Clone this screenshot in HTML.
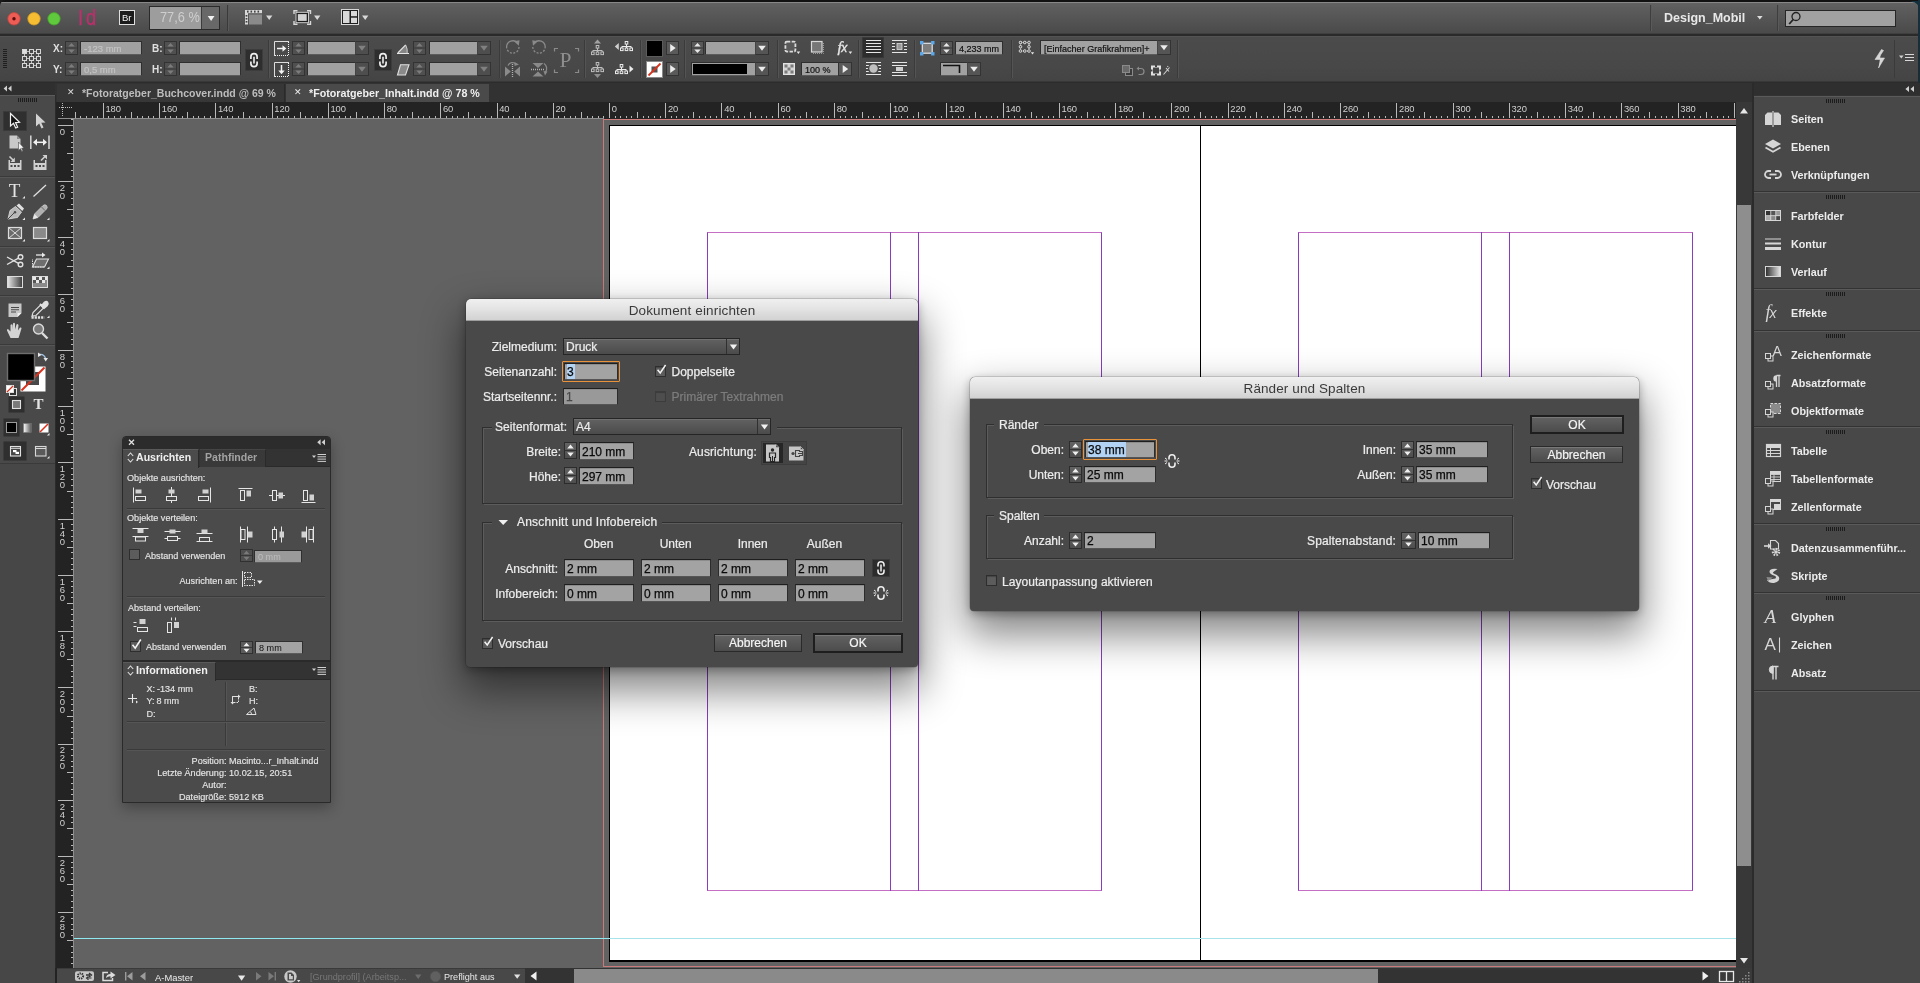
<!DOCTYPE html>
<html><head><meta charset="utf-8"><title>InDesign</title>
<style>
*{box-sizing:border-box;margin:0;padding:0}
html,body{width:1920px;height:983px;overflow:hidden;background:#474747;font-family:"Liberation Sans",sans-serif;font-size:11px;color:#e6e6e6}
.a{position:absolute}
svg{position:absolute;overflow:visible}
.t{position:absolute;white-space:nowrap;line-height:1}
.fld{position:absolute;background:#a2a2a2;border:1px solid #2f2f2f;border-bottom-color:#5c5c5c;color:#111;font-size:12px;line-height:1;white-space:nowrap;overflow:hidden}
.dt{-webkit-text-stroke:0.22px currentColor}
.sep{position:absolute;width:1px;background:#3a3a3a;border-right:1px solid #555;box-sizing:content-box}
</style></head><body><div id="root" style="position:absolute;left:0;top:0;width:1920px;height:983px;will-change:transform;overflow:hidden">
<!-- app bar -->
<div class="a" style="left:0;top:0;width:1920px;height:36px;background:linear-gradient(#121212 0,#121212 1.800px,#8a8a8a 2px,#868686 2.800px,#626262 3.200px,#5c5c5c 9px,#4a4a4a 33px,#2a2a2a 34.500px,#2a2a2a 36px)"></div>
<!-- control bar -->
<div class="a" style="left:0;top:36px;width:1920px;height:47px;background:linear-gradient(#5a5a5a 0,#4b4b4b 1px,#484848 30px,#444 45px,#2c2c2c 46px)"></div>
<!-- tab bar -->
<div class="a" style="left:0;top:83px;width:1920px;height:19px;background:#323232"></div>
<div class="a" style="left:57px;top:84px;width:228px;height:18px;background:#373737;border-right:1px solid #2a2a2a"></div>
<div class="a" style="left:286px;top:84px;width:203px;height:18px;background:#4a4a4a"></div>
<div class="t" style="left:66.500px;top:87.500px;font-size:9px;color:#ddd">✕</div>
<div class="t" style="left:82px;top:87.5px;font-size:11.5px;font-weight:bold;color:#bdbdbd;transform:scaleX(0.915);transform-origin:0 0">*Fotoratgeber_Buchcover.indd @ 69 %</div>
<div class="t" style="left:293.500px;top:87.500px;font-size:9px;color:#eee">✕</div>
<div class="t" style="left:309px;top:87.5px;font-size:11.5px;font-weight:bold;color:#f0f0f0;transform:scaleX(0.93);transform-origin:0 0">*Fotoratgeber_Inhalt.indd @ 78 %</div>
<!-- canvas -->
<div class="a" style="left:73px;top:118px;width:1663px;height:851px;background:#626262;overflow:hidden">
  <!-- page (coords relative: subtract 73,118) -->
  <div class="a" style="left:536px;top:7px;width:1200px;height:837px;background:#fff;border:1px solid #000;border-bottom-width:2px"></div>
  <!-- spine -->
  <div class="a" style="left:1127px;top:7px;width:1px;height:836px;background:#000"></div>
  <!-- bleed red -->
  <div class="a" style="left:530px;top:0px;width:1300px;height:849px;border:1.3px solid #c97b7b;border-top:2px solid #cf7c7c"></div>
  <!-- margins left page: abs x 707.5..1101.5 y 232..890 -->
  <div class="a" style="left:634px;top:114px;width:395px;height:659px;border:1px solid #883cbe;border-top-color:#c46fc4;border-bottom-color:#c46fc4"></div>
  <div class="a" style="left:817px;top:114px;width:29px;height:659px;border-left:1px solid #883cbe;border-right:1px solid #883cbe"></div>
  <div class="a" style="left:1225px;top:114px;width:395px;height:659px;border:1px solid #883cbe;border-top-color:#c46fc4;border-bottom-color:#c46fc4"></div>
  <div class="a" style="left:1408px;top:114px;width:29px;height:659px;border-left:1px solid #883cbe;border-right:1px solid #883cbe"></div>
  <!-- cyan guide -->
  <div class="a" style="left:0;top:820px;width:536px;height:1.4px;background:#8fe9f2"></div>
  <div class="a" style="left:536px;top:820px;width:1200px;height:1.4px;background:#a6e3ea"></div>
</div>
<!-- v scrollbar -->
<div class="a" style="left:1736px;top:102px;width:16px;height:866px;background:#383838"></div>
<div class="a" style="left:1737px;top:205px;width:14px;height:661px;background:#8e8e8e"></div>
<svg style="left:1740px;top:107px" width="9" height="8"><path d="M0 6.500 L4 1 L8 6.500Z" fill="#e6e6e6"/></svg>
<svg style="left:1740px;top:957px" width="9" height="8"><path d="M0 1 L4 6.500 L8 1Z" fill="#e6e6e6"/></svg>
<div class="a" style="left:1752px;top:83px;width:2px;height:900px;background:#2b2b2b"></div>
<!-- bottom bar -->
<div class="a" style="left:56px;top:968px;width:1696px;height:15px;background:#484848;border-top:1px solid #3a3a3a"></div>
<div class="a" style="left:525px;top:968px;width:1185px;height:15px;background:#333"></div>
<div class="a" style="left:574px;top:969px;width:804px;height:14px;background:#8a8a8a"></div>
<div class="a" style="left:1710px;top:968px;width:42px;height:15px;background:#3a3a3a"></div>
<div class="a" style="left:56px;top:102px;width:1680px;height:17px;background:#232323"></div>
<div class="a" style="left:56px;top:118px;width:18px;height:850px;background:#232323"></div>
<div class="a" style="left:55px;top:95px;width:1px;height:888px;background:#2b2b2b"></div>
<div class="a" style="left:58px;top:118px;width:546px;height:1px;background:#8e8e8e"></div>
<svg style="left:0;top:0" width="1920" height="983" shape-rendering="crispEdges">
<path d="M75.5 112 V118 M80.5 116 V118 M86.5 116 V118 M92.5 116 V118 M97.5 116 V118 M103.5 103 V118 M108.5 116 V118 M114.5 116 V118 M120.5 116 V118 M125.5 116 V118 M131.5 112 V118 M137.5 116 V118 M142.5 116 V118 M148.5 116 V118 M153.5 116 V118 M159.5 103 V118 M165.5 116 V118 M170.5 116 V118 M176.5 116 V118 M182.5 116 V118 M187.5 112 V118 M193.5 116 V118 M198.5 116 V118 M204.5 116 V118 M210.5 116 V118 M215.5 103 V118 M221.5 116 V118 M227.5 116 V118 M232.5 116 V118 M238.5 116 V118 M243.5 112 V118 M249.5 116 V118 M255.5 116 V118 M260.5 116 V118 M266.5 116 V118 M272.5 103 V118 M277.5 116 V118 M283.5 116 V118 M288.5 116 V118 M294.5 116 V118 M300.5 112 V118 M305.5 116 V118 M311.5 116 V118 M317.5 116 V118 M322.5 116 V118 M328.5 103 V118 M333.5 116 V118 M339.5 116 V118 M345.5 116 V118 M350.5 116 V118 M356.5 112 V118 M362.5 116 V118 M367.5 116 V118 M373.5 116 V118 M378.5 116 V118 M384.5 103 V118 M390.5 116 V118 M395.5 116 V118 M401.5 116 V118 M407.5 116 V118 M412.5 112 V118 M418.5 116 V118 M423.5 116 V118 M429.5 116 V118 M435.5 116 V118 M440.5 103 V118 M446.5 116 V118 M452.5 116 V118 M457.5 116 V118 M463.5 116 V118 M468.5 112 V118 M474.5 116 V118 M480.5 116 V118 M485.5 116 V118 M491.5 116 V118 M497.5 103 V118 M502.5 116 V118 M508.5 116 V118 M513.5 116 V118 M519.5 116 V118 M525.5 112 V118 M530.5 116 V118 M536.5 116 V118 M542.5 116 V118 M547.5 116 V118 M553.5 103 V118 M558.5 116 V118 M564.5 116 V118 M570.5 116 V118 M575.5 116 V118 M581.5 112 V118 M587.5 116 V118 M592.5 116 V118 M598.5 116 V118 M603.5 116 V118 M609.5 103 V118 M615.5 116 V118 M620.5 116 V118 M626.5 116 V118 M631.5 116 V118 M637.5 112 V118 M643.5 116 V118 M648.5 116 V118 M654.5 116 V118 M660.5 116 V118 M665.5 103 V118 M671.5 116 V118 M676.5 116 V118 M682.5 116 V118 M688.5 116 V118 M693.5 112 V118 M699.5 116 V118 M705.5 116 V118 M710.5 116 V118 M716.5 116 V118 M721.5 103 V118 M727.5 116 V118 M733.5 116 V118 M738.5 116 V118 M744.5 116 V118 M750.5 112 V118 M755.5 116 V118 M761.5 116 V118 M766.5 116 V118 M772.5 116 V118 M778.5 103 V118 M783.5 116 V118 M789.5 116 V118 M795.5 116 V118 M800.5 116 V118 M806.5 112 V118 M811.5 116 V118 M817.5 116 V118 M823.5 116 V118 M828.5 116 V118 M834.5 103 V118 M840.5 116 V118 M845.5 116 V118 M851.5 116 V118 M856.5 116 V118 M862.5 112 V118 M868.5 116 V118 M873.5 116 V118 M879.5 116 V118 M885.5 116 V118 M890.5 103 V118 M896.5 116 V118 M901.5 116 V118 M907.5 116 V118 M913.5 116 V118 M918.5 112 V118 M924.5 116 V118 M930.5 116 V118 M935.5 116 V118 M941.5 116 V118 M946.5 103 V118 M952.5 116 V118 M958.5 116 V118 M963.5 116 V118 M969.5 116 V118 M975.5 112 V118 M980.5 116 V118 M986.5 116 V118 M991.5 116 V118 M997.5 116 V118 M1003.5 103 V118 M1008.5 116 V118 M1014.5 116 V118 M1020.5 116 V118 M1025.5 116 V118 M1031.5 112 V118 M1036.5 116 V118 M1042.5 116 V118 M1048.5 116 V118 M1053.5 116 V118 M1059.5 103 V118 M1065.5 116 V118 M1070.5 116 V118 M1076.5 116 V118 M1081.5 116 V118 M1087.5 112 V118 M1093.5 116 V118 M1098.5 116 V118 M1104.5 116 V118 M1110.5 116 V118 M1115.5 103 V118 M1121.5 116 V118 M1126.5 116 V118 M1132.5 116 V118 M1138.5 116 V118 M1143.5 112 V118 M1149.5 116 V118 M1155.5 116 V118 M1160.5 116 V118 M1166.5 116 V118 M1171.5 103 V118 M1177.5 116 V118 M1183.5 116 V118 M1188.5 116 V118 M1194.5 116 V118 M1200.5 112 V118 M1205.5 116 V118 M1211.5 116 V118 M1216.5 116 V118 M1222.5 116 V118 M1228.5 103 V118 M1233.5 116 V118 M1239.5 116 V118 M1245.5 116 V118 M1250.5 116 V118 M1256.5 112 V118 M1261.5 116 V118 M1267.5 116 V118 M1273.5 116 V118 M1278.5 116 V118 M1284.5 103 V118 M1290.5 116 V118 M1295.5 116 V118 M1301.5 116 V118 M1306.5 116 V118 M1312.5 112 V118 M1318.5 116 V118 M1323.5 116 V118 M1329.5 116 V118 M1334.5 116 V118 M1340.5 103 V118 M1346.5 116 V118 M1351.5 116 V118 M1357.5 116 V118 M1363.5 116 V118 M1368.5 112 V118 M1374.5 116 V118 M1379.5 116 V118 M1385.5 116 V118 M1391.5 116 V118 M1396.5 103 V118 M1402.5 116 V118 M1408.5 116 V118 M1413.5 116 V118 M1419.5 116 V118 M1424.5 112 V118 M1430.5 116 V118 M1436.5 116 V118 M1441.5 116 V118 M1447.5 116 V118 M1453.5 103 V118 M1458.5 116 V118 M1464.5 116 V118 M1469.5 116 V118 M1475.5 116 V118 M1481.5 112 V118 M1486.5 116 V118 M1492.5 116 V118 M1498.5 116 V118 M1503.5 116 V118 M1509.5 103 V118 M1514.5 116 V118 M1520.5 116 V118 M1526.5 116 V118 M1531.5 116 V118 M1537.5 112 V118 M1543.5 116 V118 M1548.5 116 V118 M1554.5 116 V118 M1559.5 116 V118 M1565.5 103 V118 M1571.5 116 V118 M1576.5 116 V118 M1582.5 116 V118 M1588.5 116 V118 M1593.5 112 V118 M1599.5 116 V118 M1604.5 116 V118 M1610.5 116 V118 M1616.5 116 V118 M1621.5 103 V118 M1627.5 116 V118 M1633.5 116 V118 M1638.5 116 V118 M1644.5 116 V118 M1649.5 112 V118 M1655.5 116 V118 M1661.5 116 V118 M1666.5 116 V118 M1672.5 116 V118 M1678.5 103 V118 M1683.5 116 V118 M1689.5 116 V118 M1694.5 116 V118 M1700.5 116 V118 M1706.5 112 V118 M1711.5 116 V118 M1717.5 116 V118 M1723.5 116 V118 M1728.5 116 V118 M1734.5 103 V118" stroke="#b9b9b9" stroke-width="1" fill="none"/>
<path d="M71 119.5 H73 M58 125.5 H73 M71 131.5 H73 M71 136.5 H73 M71 142.5 H73 M71 147.5 H73 M67 153.5 H73 M71 159.5 H73 M71 164.5 H73 M71 170.5 H73 M71 176.5 H73 M58 181.5 H73 M71 187.5 H73 M71 192.5 H73 M71 198.5 H73 M71 204.5 H73 M67 209.5 H73 M71 215.5 H73 M71 221.5 H73 M71 226.5 H73 M71 232.5 H73 M58 237.5 H73 M71 243.5 H73 M71 249.5 H73 M71 254.5 H73 M71 260.5 H73 M67 266.5 H73 M71 271.5 H73 M71 277.5 H73 M71 282.5 H73 M71 288.5 H73 M58 294.5 H73 M71 299.5 H73 M71 305.5 H73 M71 311.5 H73 M71 316.5 H73 M67 322.5 H73 M71 327.5 H73 M71 333.5 H73 M71 339.5 H73 M71 344.5 H73 M58 350.5 H73 M71 356.5 H73 M71 361.5 H73 M71 367.5 H73 M71 372.5 H73 M67 378.5 H73 M71 384.5 H73 M71 389.5 H73 M71 395.5 H73 M71 401.5 H73 M58 406.5 H73 M71 412.5 H73 M71 417.5 H73 M71 423.5 H73 M71 429.5 H73 M67 434.5 H73 M71 440.5 H73 M71 446.5 H73 M71 451.5 H73 M71 457.5 H73 M58 462.5 H73 M71 468.5 H73 M71 474.5 H73 M71 479.5 H73 M71 485.5 H73 M67 491.5 H73 M71 496.5 H73 M71 502.5 H73 M71 507.5 H73 M71 513.5 H73 M58 519.5 H73 M71 524.5 H73 M71 530.5 H73 M71 536.5 H73 M71 541.5 H73 M67 547.5 H73 M71 552.5 H73 M71 558.5 H73 M71 564.5 H73 M71 569.5 H73 M58 575.5 H73 M71 581.5 H73 M71 586.5 H73 M71 592.5 H73 M71 597.5 H73 M67 603.5 H73 M71 609.5 H73 M71 614.5 H73 M71 620.5 H73 M71 626.5 H73 M58 631.5 H73 M71 637.5 H73 M71 642.5 H73 M71 648.5 H73 M71 654.5 H73 M67 659.5 H73 M71 665.5 H73 M71 671.5 H73 M71 676.5 H73 M71 682.5 H73 M58 687.5 H73 M71 693.5 H73 M71 699.5 H73 M71 704.5 H73 M71 710.5 H73 M67 716.5 H73 M71 721.5 H73 M71 727.5 H73 M71 732.5 H73 M71 738.5 H73 M58 744.5 H73 M71 749.5 H73 M71 755.5 H73 M71 761.5 H73 M71 766.5 H73 M67 772.5 H73 M71 777.5 H73 M71 783.5 H73 M71 789.5 H73 M71 794.5 H73 M58 800.5 H73 M71 806.5 H73 M71 811.5 H73 M71 817.5 H73 M71 822.5 H73 M67 828.5 H73 M71 834.5 H73 M71 839.5 H73 M71 845.5 H73 M71 850.5 H73 M58 856.5 H73 M71 862.5 H73 M71 867.5 H73 M71 873.5 H73 M71 879.5 H73 M67 884.5 H73 M71 890.5 H73 M71 895.5 H73 M71 901.5 H73 M71 907.5 H73 M58 912.5 H73 M71 918.5 H73 M71 924.5 H73 M71 929.5 H73 M71 935.5 H73 M67 940.5 H73 M71 946.5 H73 M71 952.5 H73 M71 957.5 H73 M71 963.5 H73" stroke="#b9b9b9" stroke-width="1" fill="none"/>
<path d="M73.5 118 V968" stroke="#8e8e8e" stroke-width="1"/>
<path d="M58.5 107.5 H72 M62.5 103 V117" stroke="#bbb" stroke-width="1" stroke-dasharray="1 1" fill="none"/>
</svg>
<div class="t" style="left:105.5px;top:104.300px;font-size:9.400px;color:#d0d0d0;letter-spacing:-0.1px">180</div>
<div class="t" style="left:161.8px;top:104.300px;font-size:9.400px;color:#d0d0d0;letter-spacing:-0.1px">160</div>
<div class="t" style="left:218.0px;top:104.300px;font-size:9.400px;color:#d0d0d0;letter-spacing:-0.1px">140</div>
<div class="t" style="left:274.3px;top:104.300px;font-size:9.400px;color:#d0d0d0;letter-spacing:-0.1px">120</div>
<div class="t" style="left:330.5px;top:104.300px;font-size:9.400px;color:#d0d0d0;letter-spacing:-0.1px">100</div>
<div class="t" style="left:386.7px;top:104.300px;font-size:9.400px;color:#d0d0d0;letter-spacing:-0.1px">80</div>
<div class="t" style="left:443.0px;top:104.300px;font-size:9.400px;color:#d0d0d0;letter-spacing:-0.1px">60</div>
<div class="t" style="left:499.2px;top:104.300px;font-size:9.400px;color:#d0d0d0;letter-spacing:-0.1px">40</div>
<div class="t" style="left:555.5px;top:104.300px;font-size:9.400px;color:#d0d0d0;letter-spacing:-0.1px">20</div>
<div class="t" style="left:611.7px;top:104.300px;font-size:9.400px;color:#d0d0d0;letter-spacing:-0.1px">0</div>
<div class="t" style="left:667.9px;top:104.300px;font-size:9.400px;color:#d0d0d0;letter-spacing:-0.1px">20</div>
<div class="t" style="left:724.2px;top:104.300px;font-size:9.400px;color:#d0d0d0;letter-spacing:-0.1px">40</div>
<div class="t" style="left:780.4px;top:104.300px;font-size:9.400px;color:#d0d0d0;letter-spacing:-0.1px">60</div>
<div class="t" style="left:836.7px;top:104.300px;font-size:9.400px;color:#d0d0d0;letter-spacing:-0.1px">80</div>
<div class="t" style="left:892.9px;top:104.300px;font-size:9.400px;color:#d0d0d0;letter-spacing:-0.1px">100</div>
<div class="t" style="left:949.1px;top:104.300px;font-size:9.400px;color:#d0d0d0;letter-spacing:-0.1px">120</div>
<div class="t" style="left:1005.4px;top:104.300px;font-size:9.400px;color:#d0d0d0;letter-spacing:-0.1px">140</div>
<div class="t" style="left:1061.6px;top:104.300px;font-size:9.400px;color:#d0d0d0;letter-spacing:-0.1px">160</div>
<div class="t" style="left:1117.9px;top:104.300px;font-size:9.400px;color:#d0d0d0;letter-spacing:-0.1px">180</div>
<div class="t" style="left:1174.1px;top:104.300px;font-size:9.400px;color:#d0d0d0;letter-spacing:-0.1px">200</div>
<div class="t" style="left:1230.3px;top:104.300px;font-size:9.400px;color:#d0d0d0;letter-spacing:-0.1px">220</div>
<div class="t" style="left:1286.6px;top:104.300px;font-size:9.400px;color:#d0d0d0;letter-spacing:-0.1px">240</div>
<div class="t" style="left:1342.8px;top:104.300px;font-size:9.400px;color:#d0d0d0;letter-spacing:-0.1px">260</div>
<div class="t" style="left:1399.1px;top:104.300px;font-size:9.400px;color:#d0d0d0;letter-spacing:-0.1px">280</div>
<div class="t" style="left:1455.3px;top:104.300px;font-size:9.400px;color:#d0d0d0;letter-spacing:-0.1px">300</div>
<div class="t" style="left:1511.5px;top:104.300px;font-size:9.400px;color:#d0d0d0;letter-spacing:-0.1px">320</div>
<div class="t" style="left:1567.8px;top:104.300px;font-size:9.400px;color:#d0d0d0;letter-spacing:-0.1px">340</div>
<div class="t" style="left:1624.0px;top:104.300px;font-size:9.400px;color:#d0d0d0;letter-spacing:-0.1px">360</div>
<div class="t" style="left:1680.3px;top:104.300px;font-size:9.400px;color:#d0d0d0;letter-spacing:-0.1px">380</div>
<div class="t" style="left:59.8px;top:126.8px;font-size:9.5px;color:#d0d0d0">0</div>
<div class="t" style="left:59.8px;top:183.0px;font-size:9.5px;color:#d0d0d0">2</div>
<div class="t" style="left:59.8px;top:191.0px;font-size:9.5px;color:#d0d0d0">0</div>
<div class="t" style="left:59.8px;top:239.3px;font-size:9.5px;color:#d0d0d0">4</div>
<div class="t" style="left:59.8px;top:247.3px;font-size:9.5px;color:#d0d0d0">0</div>
<div class="t" style="left:59.8px;top:295.5px;font-size:9.5px;color:#d0d0d0">6</div>
<div class="t" style="left:59.8px;top:303.5px;font-size:9.5px;color:#d0d0d0">0</div>
<div class="t" style="left:59.8px;top:351.8px;font-size:9.5px;color:#d0d0d0">8</div>
<div class="t" style="left:59.8px;top:359.8px;font-size:9.5px;color:#d0d0d0">0</div>
<div class="t" style="left:59.8px;top:408.0px;font-size:9.5px;color:#d0d0d0">1</div>
<div class="t" style="left:59.8px;top:416.0px;font-size:9.5px;color:#d0d0d0">0</div>
<div class="t" style="left:59.8px;top:424.0px;font-size:9.5px;color:#d0d0d0">0</div>
<div class="t" style="left:59.8px;top:464.2px;font-size:9.5px;color:#d0d0d0">1</div>
<div class="t" style="left:59.8px;top:472.2px;font-size:9.5px;color:#d0d0d0">2</div>
<div class="t" style="left:59.8px;top:480.2px;font-size:9.5px;color:#d0d0d0">0</div>
<div class="t" style="left:59.8px;top:520.5px;font-size:9.5px;color:#d0d0d0">1</div>
<div class="t" style="left:59.8px;top:528.5px;font-size:9.5px;color:#d0d0d0">4</div>
<div class="t" style="left:59.8px;top:536.5px;font-size:9.5px;color:#d0d0d0">0</div>
<div class="t" style="left:59.8px;top:576.7px;font-size:9.5px;color:#d0d0d0">1</div>
<div class="t" style="left:59.8px;top:584.7px;font-size:9.5px;color:#d0d0d0">6</div>
<div class="t" style="left:59.8px;top:592.7px;font-size:9.5px;color:#d0d0d0">0</div>
<div class="t" style="left:59.8px;top:633.0px;font-size:9.5px;color:#d0d0d0">1</div>
<div class="t" style="left:59.8px;top:641.0px;font-size:9.5px;color:#d0d0d0">8</div>
<div class="t" style="left:59.8px;top:649.0px;font-size:9.5px;color:#d0d0d0">0</div>
<div class="t" style="left:59.8px;top:689.2px;font-size:9.5px;color:#d0d0d0">2</div>
<div class="t" style="left:59.8px;top:697.2px;font-size:9.5px;color:#d0d0d0">0</div>
<div class="t" style="left:59.8px;top:705.2px;font-size:9.5px;color:#d0d0d0">0</div>
<div class="t" style="left:59.8px;top:745.4px;font-size:9.5px;color:#d0d0d0">2</div>
<div class="t" style="left:59.8px;top:753.4px;font-size:9.5px;color:#d0d0d0">2</div>
<div class="t" style="left:59.8px;top:761.4px;font-size:9.5px;color:#d0d0d0">0</div>
<div class="t" style="left:59.8px;top:801.7px;font-size:9.5px;color:#d0d0d0">2</div>
<div class="t" style="left:59.8px;top:809.7px;font-size:9.5px;color:#d0d0d0">4</div>
<div class="t" style="left:59.8px;top:817.7px;font-size:9.5px;color:#d0d0d0">0</div>
<div class="t" style="left:59.8px;top:857.9px;font-size:9.5px;color:#d0d0d0">2</div>
<div class="t" style="left:59.8px;top:865.9px;font-size:9.5px;color:#d0d0d0">6</div>
<div class="t" style="left:59.8px;top:873.9px;font-size:9.5px;color:#d0d0d0">0</div>
<div class="t" style="left:59.8px;top:914.2px;font-size:9.5px;color:#d0d0d0">2</div>
<div class="t" style="left:59.8px;top:922.2px;font-size:9.5px;color:#d0d0d0">8</div>
<div class="t" style="left:59.8px;top:930.2px;font-size:9.5px;color:#d0d0d0">0</div>
<!-- traffic lights -->
<svg style="left:0;top:0" width="420" height="36">
<circle cx="14" cy="18.800" r="6.2" fill="#ee5d55" stroke="#c9453e" stroke-width="0.8"/><circle cx="14" cy="18.800" r="1.7" fill="#5a0d0a"/>
<circle cx="34" cy="18.800" r="6.2" fill="#f6bd32" stroke="#d59e22" stroke-width="0.8"/>
<circle cx="54" cy="18.800" r="6.2" fill="#5fc83c" stroke="#46a52a" stroke-width="0.8"/>
<!-- Br -->
<rect x="119.5" y="10.5" width="15" height="14" fill="#1c1c1c" stroke="#e0e0e0" stroke-width="1"/>
<!-- zoom field -->
<rect x="149.5" y="6.5" width="70" height="23" fill="#9d9d9d" stroke="#2a2a2a"/>
<rect x="202" y="7" width="17" height="22" fill="#686868"/>
<path d="M201.5 7 V29" stroke="#3c3c3c"/>
<path d="M207.700 16 h6.800 l-3.400 5 z" fill="#f2f2f2"/>
<path d="M227.5 5 V31" stroke="#3a3a3a"/><path d="M228.5 5 V31" stroke="#5a5a5a"/>
<!-- view options icon -->
<g fill="#d8d8d8">
<rect x="245" y="10" width="17" height="3.2"/><rect x="245" y="13" width="3" height="11.5"/>
<rect x="249" y="14.5" width="13" height="10" fill="#8a8a8a"/>
<path d="M266 15.5 h6.4 l-3.2 4.6z"/>
</g>
<g fill="#444"><rect x="247" y="10.6" width="1.6" height="2"/><rect x="250.5" y="10.6" width="1.6" height="2"/><rect x="254" y="10.6" width="1.6" height="2"/><rect x="257.500" y="10.6" width="1.6" height="2"/><rect x="245.6" y="15" width="1.8" height="1.6"/><rect x="245.6" y="18" width="1.8" height="1.6"/><rect x="245.6" y="21" width="1.8" height="1.6"/></g>
<!-- screen mode icon -->
<g fill="none" stroke="#d8d8d8" stroke-width="1.4">
<path d="M294 14 V10.700 H297.500 M307 10.700 H310.500 V14 M310.500 21 V24.300 H307 M297.500 24.300 H294 V21"/>
<rect x="296" y="12.300" width="12.500" height="10.400" fill="#1e1e1e" stroke="#d8d8d8" stroke-width="0.900"/><rect x="297.800" y="14.100" width="8.900" height="6.800" fill="#d2d2d2" stroke="none"/></g>
<path d="M314 15.500 h6.400 l-3.200 4.600z" fill="#d8d8d8"/>
<!-- arrange icon -->
<g fill="#d8d8d8"><rect x="341.500" y="9.500" width="17" height="15" fill="#1e1e1e" stroke="#d8d8d8" stroke-width="1"/>
<rect x="343" y="11" width="6.500" height="12"/><rect x="351" y="11" width="6" height="5.200"/><rect x="351" y="17.700" width="6" height="5.300"/>
<path d="M362 15.500 h6.400 l-3.200 4.600z"/></g>
</svg>
<div class="t" style="left:78px;top:6.600px;font-size:22.300px;letter-spacing:3.500px;color:#bd2f6d;transform:scaleX(0.820);transform-origin:0 0;-webkit-text-stroke:0.300px #bd2f6d">Id</div>
<div class="t" style="left:122px;top:13px;font-size:9.500px;color:#f0f0f0;letter-spacing:-0.1px">Br</div>
<div class="t" style="left:160px;top:10.300px;font-size:14.200px;color:#cecece;transform:scaleX(0.900);transform-origin:0 0">77,6 %</div>
<!-- right side -->
<div class="a" style="left:1650px;top:5px;width:1px;height:26px;background:#3e3e3e;border-right:1px solid #5a5a5a;box-sizing:content-box"></div>
<div class="t" style="left:1664px;top:11.500px;font-size:12.5px;font-weight:bold;color:#e8e8e8;">Design_Mobil</div>
<svg style="left:1757px;top:16px" width="6" height="4"><path d="M0 0 h5.600 l-2.800 3.600z" fill="#ddd"/></svg>
<div class="a" style="left:1777px;top:5px;width:1px;height:26px;background:#3e3e3e;border-right:1px solid #5a5a5a;box-sizing:content-box"></div>
<div class="a" style="left:1785px;top:10px;width:111px;height:17px;background:#a1a1a1;border:1px solid #262626"></div>
<svg style="left:1788px;top:11px" width="14" height="14"><circle cx="8" cy="5.500" r="4" fill="none" stroke="#222" stroke-width="1.300"/><path d="M5.200 8.500 L1.200 13" stroke="#222" stroke-width="1.800"/></svg>
<!-- window corner -->
<div class="a" style="left:1918px;top:0;width:2px;height:983px;background:linear-gradient(#16303c 0,#1c2a30 120px,#222 300px,#222 100%)"></div>
<svg style="left:1911px;top:1px" width="8" height="8"><path d="M8 0 V8 A7 7 0 0 0 1 1 L0 0z" fill="#15303c"/></svg>
<svg style="left:0;top:0" width="6" height="6"><path d="M0 0 V6 A6 6 0 0 1 6 0z" fill="#1a1a1a"/></svg>
<svg style="left:3px;top:49px" width="5" height="20"><path d="M0 0.500 H4 M0 2.500 H4 M0 4.500 H4 M0 6.500 H4 M0 8.500 H4 M0 10.500 H4 M0 12.500 H4 M0 14.500 H4 M0 16.500 H4 M0 18.500 H4" stroke="#1f1f1f"/></svg>
<svg style="left:22px;top:49px" width="20" height="20"><g fill="none" stroke="#d6d6d6" stroke-width="1"><path d="M2.500 2.500 H17.500 M2.500 9.500 H17.500 M2.500 16.500 H17.500 M2.500 2.500 V16.500 M9.500 2.500 V16.500 M16.500 2.500 V16.500" stroke="#bdbdbd"/><rect x="0.5" y="0.5" width="4" height="4" fill="#e0e0e0"/><rect x="7.5" y="0.5" width="4" height="4" fill="#484848"/><rect x="14.5" y="0.5" width="4" height="4" fill="#484848"/><rect x="0.5" y="7.5" width="4" height="4" fill="#484848"/><rect x="7.5" y="7.5" width="4" height="4" fill="#484848"/><rect x="14.5" y="7.5" width="4" height="4" fill="#484848"/><rect x="0.5" y="14.5" width="4" height="4" fill="#484848"/><rect x="7.5" y="14.5" width="4" height="4" fill="#484848"/><rect x="14.5" y="14.5" width="4" height="4" fill="#484848"/></g></svg>
<div class="t" style="left:53px;top:43.5px;font-size:10px;color:#e0e0e0;font-weight:bold;">X:</div>
<div class="t" style="left:53px;top:64.5px;font-size:10px;color:#e0e0e0;font-weight:bold;">Y:</div>
<div class="a" style="left:65px;top:41px;width:13px;height:14px;background:#505050;border:1px solid #333"></div><svg style="left:65px;top:41px" width="13" height="14"><path d="M3.3 5.500 l3.200 -3.600 l3.200 3.600z M3.3 8.5 l3.200 3.600 l3.200 -3.600z" fill="#7c7c7c"/><path d="M1 7.0 H12" stroke="#3a3a3a"/></svg>
<div class="a" style="left:65px;top:62px;width:13px;height:14px;background:#505050;border:1px solid #333"></div><svg style="left:65px;top:62px" width="13" height="14"><path d="M3.3 5.500 l3.200 -3.600 l3.200 3.600z M3.3 8.5 l3.200 3.600 l3.200 -3.600z" fill="#7c7c7c"/><path d="M1 7.0 H12" stroke="#3a3a3a"/></svg>
<div class="fld" style="left:80px;top:41px;width:62px;height:14px;background:#a1a1a1;color:#c2c2c2;font-size:9.5px;line-height:11px;padding:0.500px 0 0 3px"><span style="display:inline-block;transform:scaleX(1);transform-origin:0 0;-webkit-text-stroke:0.200px currentColor">-123 mm</span></div>
<div class="fld" style="left:80px;top:62px;width:62px;height:14px;background:#a1a1a1;color:#c2c2c2;font-size:9.5px;line-height:11px;padding:0.500px 0 0 3px"><span style="display:inline-block;transform:scaleX(1);transform-origin:0 0;-webkit-text-stroke:0.200px currentColor">0,5 mm</span></div>
<div class="t" style="left:152px;top:43.5px;font-size:10px;color:#e0e0e0;font-weight:bold;">B:</div>
<div class="t" style="left:152px;top:64.5px;font-size:10px;color:#e0e0e0;font-weight:bold;">H:</div>
<div class="a" style="left:164px;top:41px;width:13px;height:14px;background:#505050;border:1px solid #333"></div><svg style="left:164px;top:41px" width="13" height="14"><path d="M3.3 5.500 l3.200 -3.600 l3.200 3.600z M3.3 8.5 l3.200 3.600 l3.200 -3.600z" fill="#7c7c7c"/><path d="M1 7.0 H12" stroke="#3a3a3a"/></svg>
<div class="a" style="left:164px;top:62px;width:13px;height:14px;background:#505050;border:1px solid #333"></div><svg style="left:164px;top:62px" width="13" height="14"><path d="M3.3 5.500 l3.200 -3.600 l3.200 3.600z M3.3 8.5 l3.200 3.600 l3.200 -3.600z" fill="#7c7c7c"/><path d="M1 7.0 H12" stroke="#3a3a3a"/></svg>
<div class="fld" style="left:179px;top:41px;width:62px;height:14px;background:#a1a1a1;color:#111;font-size:9.5px;line-height:11px;padding:0.500px 0 0 3px"><span style="display:inline-block;transform:scaleX(1);transform-origin:0 0;-webkit-text-stroke:0.200px currentColor"></span></div>
<div class="fld" style="left:179px;top:62px;width:62px;height:14px;background:#a1a1a1;color:#111;font-size:9.5px;line-height:11px;padding:0.500px 0 0 3px"><span style="display:inline-block;transform:scaleX(1);transform-origin:0 0;-webkit-text-stroke:0.200px currentColor"></span></div>
<div class="a" style="left:245px;top:49px;width:18px;height:22px;background:#2e2e2e;border:1px solid #3c3c3c"></div><svg style="left:245px;top:49px" width="18" height="22"><g fill="none" stroke="#eeeeee" stroke-width="1.700"><path d="M5.9 10 V7.800 A3.100 3.100 0 0 1 12.1 7.800 V10"/><path d="M5.9 12.500 V14.500 A3.100 3.100 0 0 0 12.1 14.500 V12.500"/><path d="M9.0 7.800 V14.600" stroke-width="1.600"/></g></svg>
<div class="a" style="left:268px;top:40px;width:1px;height:38px;background:#3b3b3b"></div><div class="a" style="left:269px;top:40px;width:1px;height:38px;background:#545454"></div>
<svg style="left:274px;top:41px" width="15" height="15"><path d="M0.500 15 V0.500 H15" stroke="#dedede" fill="none"/><path d="M14.500 1 V14.500 H1" stroke="#f4f4f4" stroke-dasharray="1 1" fill="none"/><path d="M3 7.500 H10" stroke="#f4f4f4" stroke-width="1.500"/><path d="M8.500 4.300 L12.300 7.500 L8.500 10.700z" fill="#f4f4f4"/></svg>
<svg style="left:274px;top:62px" width="15" height="15"><path d="M0.500 15 V0.500 H15" stroke="#dedede" fill="none"/><path d="M14.500 1 V14.500 H1" stroke="#f4f4f4" stroke-dasharray="1 1" fill="none"/><path d="M7.500 3 V10" stroke="#f4f4f4" stroke-width="1.500"/><path d="M4.300 8.500 L7.500 12.300 L10.700 8.500z" fill="#f4f4f4"/></svg>
<div class="a" style="left:292px;top:41px;width:13px;height:14px;background:#505050;border:1px solid #333"></div><svg style="left:292px;top:41px" width="13" height="14"><path d="M3.3 5.500 l3.200 -3.600 l3.200 3.600z M3.3 8.5 l3.200 3.600 l3.200 -3.600z" fill="#7c7c7c"/><path d="M1 7.0 H12" stroke="#3a3a3a"/></svg>
<div class="a" style="left:292px;top:62px;width:13px;height:14px;background:#505050;border:1px solid #333"></div><svg style="left:292px;top:62px" width="13" height="14"><path d="M3.3 5.500 l3.200 -3.600 l3.200 3.600z M3.3 8.5 l3.200 3.600 l3.200 -3.600z" fill="#7c7c7c"/><path d="M1 7.0 H12" stroke="#3a3a3a"/></svg>
<div class="fld" style="left:307px;top:41px;width:49px;height:14px;background:#a1a1a1;color:#111;font-size:9.5px;line-height:11px;padding:0.500px 0 0 3px"><span style="display:inline-block;transform:scaleX(1);transform-origin:0 0;-webkit-text-stroke:0.200px currentColor"></span></div>
<div class="fld" style="left:307px;top:62px;width:49px;height:14px;background:#a1a1a1;color:#111;font-size:9.5px;line-height:11px;padding:0.500px 0 0 3px"><span style="display:inline-block;transform:scaleX(1);transform-origin:0 0;-webkit-text-stroke:0.200px currentColor"></span></div>
<div class="a" style="left:355px;top:41px;width:14px;height:14px;background:#4e4e4e;border:1px solid #333;border-left-color:#444"></div><svg style="left:355px;top:41px" width="14" height="14"><path d="M3.2 4.7 h7.600 l-3.800 5z" fill="#808080"/></svg>
<div class="a" style="left:355px;top:62px;width:14px;height:14px;background:#4e4e4e;border:1px solid #333;border-left-color:#444"></div><svg style="left:355px;top:62px" width="14" height="14"><path d="M3.2 4.7 h7.600 l-3.800 5z" fill="#808080"/></svg>
<div class="a" style="left:374px;top:49px;width:18px;height:22px;background:#2e2e2e;border:1px solid #3c3c3c"></div><svg style="left:374px;top:49px" width="18" height="22"><g fill="none" stroke="#eeeeee" stroke-width="1.700"><path d="M5.9 10 V7.800 A3.100 3.100 0 0 1 12.1 7.800 V10"/><path d="M5.9 12.500 V14.500 A3.100 3.100 0 0 0 12.1 14.500 V12.500"/><path d="M9.0 7.800 V14.600" stroke-width="1.600"/></g></svg>
<svg style="left:397px;top:44px" width="13" height="11"><path d="M1 9.500 L8.700 1 Q10.800 5 10.200 9.500z" fill="#858585"/><path d="M0 9.500 H12 M0.800 9 L8.700 0.800" stroke="#e6e6e6" stroke-width="1.200" fill="none"/><path d="M8.700 1 Q10.800 5 10.200 9.500" stroke="#d8d8d8" stroke-width="0.900" fill="none"/></svg>
<svg style="left:397px;top:64px" width="13" height="12"><path d="M3.500 0.800 H12 L8.500 11 H0.500z" stroke="#e0e0e0" stroke-width="1.100" fill="#8a8a8a"/></svg>
<div class="a" style="left:413px;top:41px;width:13px;height:14px;background:#505050;border:1px solid #333"></div><svg style="left:413px;top:41px" width="13" height="14"><path d="M3.3 5.500 l3.200 -3.600 l3.200 3.600z M3.3 8.5 l3.200 3.600 l3.200 -3.600z" fill="#7c7c7c"/><path d="M1 7.0 H12" stroke="#3a3a3a"/></svg>
<div class="a" style="left:413px;top:62px;width:13px;height:14px;background:#505050;border:1px solid #333"></div><svg style="left:413px;top:62px" width="13" height="14"><path d="M3.3 5.500 l3.200 -3.600 l3.200 3.600z M3.3 8.5 l3.200 3.600 l3.200 -3.600z" fill="#7c7c7c"/><path d="M1 7.0 H12" stroke="#3a3a3a"/></svg>
<div class="fld" style="left:429px;top:41px;width:49px;height:14px;background:#a1a1a1;color:#111;font-size:9.5px;line-height:11px;padding:0.500px 0 0 3px"><span style="display:inline-block;transform:scaleX(1);transform-origin:0 0;-webkit-text-stroke:0.200px currentColor"></span></div>
<div class="fld" style="left:429px;top:62px;width:49px;height:14px;background:#a1a1a1;color:#111;font-size:9.5px;line-height:11px;padding:0.500px 0 0 3px"><span style="display:inline-block;transform:scaleX(1);transform-origin:0 0;-webkit-text-stroke:0.200px currentColor"></span></div>
<div class="a" style="left:477px;top:41px;width:14px;height:14px;background:#4e4e4e;border:1px solid #333;border-left-color:#444"></div><svg style="left:477px;top:41px" width="14" height="14"><path d="M3.2 4.7 h7.600 l-3.800 5z" fill="#808080"/></svg>
<div class="a" style="left:477px;top:62px;width:14px;height:14px;background:#4e4e4e;border:1px solid #333;border-left-color:#444"></div><svg style="left:477px;top:62px" width="14" height="14"><path d="M3.2 4.7 h7.600 l-3.800 5z" fill="#808080"/></svg>
<div class="a" style="left:499px;top:40px;width:1px;height:38px;background:#3b3b3b"></div><div class="a" style="left:500px;top:40px;width:1px;height:38px;background:#545454"></div>
<svg style="left:0;top:0" width="700" height="83"><g fill="none" stroke="#8a8a8a" stroke-width="1.300"><path d="M506.600 47 A6.200 6.200 0 0 1 517.500 43"/><path d="M519 47 A6.200 6.200 0 0 1 506.600 47" stroke-dasharray="2 1.500"/><path d="M514 41.200 L519.500 40.200 L518.800 45.800z" fill="#8a8a8a" stroke="none"/><path d="M545.200 47 A6.200 6.200 0 0 0 534.300 43"/><path d="M532.800 47 A6.200 6.200 0 0 0 545.200 47" stroke-dasharray="2 1.500"/><path d="M537.800 41.200 L532.300 40.200 L533 45.800z" fill="#8a8a8a" stroke="none"/><path d="M512.500 64 V77" stroke-dasharray="1 1" stroke="#b0b0b0"/><path d="M505 66.500 L510.800 71.500 L505 76.500z M520 66.500 L514.200 71.500 L520 76.500z" fill="#8a8a8a" stroke="none"/><path d="M508 65.500 A5 5 0 0 1 516 64"/><path d="M514.500 62 L519 64.500 L514.500 66z" fill="#8a8a8a" stroke="none"/><path d="M531 69.500 H545" stroke-dasharray="1 1" stroke="#b0b0b0"/><path d="M532.500 63 L538 68 L543.500 63z M532.500 76.500 L538 71.500 L543.500 76.500z" fill="#8a8a8a" stroke="none"/><path d="M544 63.500 A6 6 0 0 1 545.500 72"/><path d="M543.500 71 L547.500 71.500 L545 75.500z" fill="#8a8a8a" stroke="none"/><path d="M554.500 51.500 V48.500 H558 M575 48.500 H578.500 V51.500 M578.500 69.500 V72.500 H575 M558 72.500 H554.500 V69.500" stroke-width="1.200"/></g></svg>
<div class="t" style="left:559.500px;top:49.500px;font-family:'Liberation Serif',serif;font-size:21.500px;color:#8e8e8e">P</div>
<div class="a" style="left:584px;top:40px;width:1px;height:38px;background:#3b3b3b"></div><div class="a" style="left:585px;top:40px;width:1px;height:38px;background:#545454"></div>
<svg style="left:0;top:0" width="700" height="83"><g fill="none" stroke="#bdbdbd" stroke-width="1"><rect x="596.2" y="45.5" width="2.600" height="2.600"/><path d="M597.5 48.1 V50.5 M592.8 52.0 V50.5 H602.2 V52.0 M597.5 50.5 V52.0"/><rect x="591.5" y="52.0" width="2.600" height="2.600"/><rect x="596.2" y="52.0" width="2.600" height="2.600"/><rect x="600.9" y="52.0" width="2.600" height="2.600"/></g><path d="M594 43.500 L597.500 39.500 L601 43.500z" fill="#a2a2a2"/><g fill="none" stroke="#bdbdbd" stroke-width="1"><rect x="596.2" y="62.5" width="2.600" height="2.600"/><path d="M597.5 65.1 V67.5 M592.8 69.0 V67.5 H602.2 V69.0 M597.5 67.5 V69.0"/><rect x="591.5" y="69.0" width="2.600" height="2.600"/><rect x="596.2" y="69.0" width="2.600" height="2.600"/><rect x="600.9" y="69.0" width="2.600" height="2.600"/></g><path d="M594 74 L597.500 78 L601 74z" fill="#8e8e8e"/><g fill="none" stroke="#ececec" stroke-width="1"><rect x="625.2" y="41.5" width="2.600" height="2.600"/><path d="M626.5 44.1 V46.5 M621.8 48.0 V46.5 H631.2 V48.0 M626.5 46.5 V48.0"/><rect x="620.5" y="48.0" width="2.600" height="2.600"/><rect x="625.2" y="48.0" width="2.600" height="2.600"/><rect x="629.9" y="48.0" width="2.600" height="2.600"/></g><path d="M618.800 43 V50 L614.800 46.500z" fill="#cfcfcf"/><g fill="none" stroke="#ececec" stroke-width="1"><rect x="620.2" y="64.5" width="2.600" height="2.600"/><path d="M621.5 67.1 V69.5 M616.8 71.0 V69.5 H626.2 V71.0 M621.5 69.5 V71.0"/><rect x="615.5" y="71.0" width="2.600" height="2.600"/><rect x="620.2" y="71.0" width="2.600" height="2.600"/><rect x="624.9" y="71.0" width="2.600" height="2.600"/></g><path d="M629.500 65.500 V72.500 L633.500 69z" fill="#ececec"/></svg>
<div class="a" style="left:640px;top:40px;width:1px;height:38px;background:#3b3b3b"></div><div class="a" style="left:641px;top:40px;width:1px;height:38px;background:#545454"></div>
<div class="a" style="left:646px;top:40px;width:17px;height:17px;background:#000;border:1px solid #5c5c5c"></div>
<div class="a" style="left:646px;top:61px;width:17px;height:17px;background:#fff;border:1px solid #8a8a8a"></div>
<svg style="left:646px;top:61px" width="17" height="17"><rect x="5.500" y="5.500" width="6" height="6" fill="#555"/><path d="M2.500 14.500 L14.500 2.500" stroke="#d9321e" stroke-width="1.800"/></svg>
<div class="a" style="left:666px;top:41px;width:13px;height:14px;background:#5a5a5a;border:1px solid #333"></div><svg style="left:666px;top:41px" width="13" height="14"><path d="M4.2 3 v8 l5.500 -4z" fill="#ececec"/></svg>
<div class="a" style="left:666px;top:62px;width:13px;height:14px;background:#5a5a5a;border:1px solid #333"></div><svg style="left:666px;top:62px" width="13" height="14"><path d="M4.2 3 v8 l5.500 -4z" fill="#ececec"/></svg>
<div class="a" style="left:684px;top:40px;width:1px;height:38px;background:#3b3b3b"></div><div class="a" style="left:685px;top:40px;width:1px;height:38px;background:#545454"></div>
<div class="a" style="left:691px;top:41px;width:13px;height:14px;background:#585858;border:1px solid #333"></div><svg style="left:691px;top:41px" width="13" height="14"><path d="M3.3 5.500 l3.200 -3.600 l3.200 3.600z M3.3 8.5 l3.200 3.600 l3.200 -3.600z" fill="#e8e8e8"/><path d="M1 7.0 H12" stroke="#3a3a3a"/></svg>
<div class="fld" style="left:705px;top:41px;width:51px;height:14px;background:#a1a1a1;color:#111;font-size:9.5px;line-height:11px;padding:0.500px 0 0 3px"><span style="display:inline-block;transform:scaleX(1);transform-origin:0 0;-webkit-text-stroke:0.200px currentColor"></span></div>
<div class="a" style="left:755px;top:41px;width:14px;height:14px;background:#555;border:1px solid #333;border-left-color:#444"></div><svg style="left:755px;top:41px" width="14" height="14"><path d="M3.2 4.7 h7.600 l-3.800 5z" fill="#ececec"/></svg>
<div class="fld" style="left:691px;top:62px;width:65px;height:14px;background:#a1a1a1;color:#111;font-size:9.5px;line-height:11px;padding:0.500px 0 0 3px"><span style="display:inline-block;transform:scaleX(1);transform-origin:0 0;-webkit-text-stroke:0.200px currentColor"></span></div>
<div class="a" style="left:693px;top:64px;width:54px;height:10px;background:#000"></div>
<div class="a" style="left:755px;top:62px;width:14px;height:14px;background:#555;border:1px solid #333;border-left-color:#444"></div><svg style="left:755px;top:62px" width="14" height="14"><path d="M3.2 4.7 h7.600 l-3.800 5z" fill="#ececec"/></svg>
<div class="a" style="left:777px;top:40px;width:1px;height:38px;background:#3b3b3b"></div><div class="a" style="left:778px;top:40px;width:1px;height:38px;background:#545454"></div>
<svg style="left:783px;top:40px" width="72" height="18"><g fill="none" stroke="#dcdcdc"><rect x="2.400" y="1.600" width="10" height="10" rx="1.500" stroke-width="1.800" stroke-dasharray="3.400 1.400" fill="#5a5a5a"/><path d="M13.600 11.600 h3.600 l-1.800 2.400z" fill="#e6e6e6" stroke="none"/><path d="M40.500 3 V13.500 H30" stroke="#9a9a9a" stroke-dasharray="1 1"/><rect x="28.500" y="1.500" width="10.500" height="10.500" fill="#777" stroke="#d8d8d8" stroke-width="1.200"/><path d="M65.600 11.600 h3.600 l-1.800 2.400z" fill="#e6e6e6" stroke="none"/></g></svg>
<div class="t" style="left:837.500px;top:38.500px;font-size:15.500px;font-style:italic;font-family:'Liberation Serif',serif;color:#e6e6e6;letter-spacing:-0.5px;-webkit-text-stroke:0.350px #e6e6e6"><i>f</i><span style="font-family:'Liberation Sans',sans-serif;font-size:12px">x</span></div>
<svg style="left:783px;top:63px" width="12" height="12"><rect x="0.500" y="0.500" width="11" height="11" fill="#d4d4d4" stroke="#e2e2e2"/><rect x="1.5" y="1.5" width="3" height="3" fill="#7c7c7c"/><rect x="7.5" y="1.5" width="3" height="3" fill="#7c7c7c"/><rect x="4.5" y="4.5" width="3" height="3" fill="#7c7c7c"/><rect x="1.5" y="7.5" width="3" height="3" fill="#7c7c7c"/><rect x="7.5" y="7.5" width="3" height="3" fill="#7c7c7c"/></svg>
<div class="fld" style="left:801px;top:62px;width:38px;height:14px;background:#a1a1a1;color:#111;font-size:9.5px;line-height:11px;padding:0.500px 0 0 3px"><span style="display:inline-block;transform:scaleX(0.95);transform-origin:0 0;-webkit-text-stroke:0.200px currentColor">100 %</span></div>
<div class="a" style="left:838px;top:62px;width:14px;height:14px;background:#5a5a5a;border:1px solid #333"></div><svg style="left:838px;top:62px" width="14" height="14"><path d="M4.7 3 v8 l5.500 -4z" fill="#ececec"/></svg>
<div class="a" style="left:858px;top:40px;width:1px;height:38px;background:#3b3b3b"></div><div class="a" style="left:859px;top:40px;width:1px;height:38px;background:#545454"></div>
<div class="a" style="left:862px;top:37px;width:22px;height:21px;background:#2d2d2d;border:1px solid #383838"></div>
<svg style="left:866px;top:40px" width="16" height="16"><path d="M0 0.5 H15 M0 3.5 H15 M0 6.5 H15 M0 9.5 H15 M0 12.5 H15" stroke="#e6e6e6" stroke-width="1" fill="none" shape-rendering="crispEdges"/><path d="M3.500 0 V14 M11.500 0 V14" stroke="#2d2d2d" stroke-width="0"/></svg>
<svg style="left:892px;top:40px" width="16" height="16"><path d="M0 0.5 H15 M0 3.5 H15 M0 6.5 H15 M0 9.5 H15 M0 12.5 H15" stroke="#e6e6e6" stroke-width="1" fill="none" shape-rendering="crispEdges"/><rect x="3" y="2" width="9" height="9" fill="#4a4a4a"/><rect x="5" y="3.500" width="5" height="6" fill="#9a9a9a" stroke="#ddd" stroke-width="0.800"/></svg>
<svg style="left:866px;top:62px" width="16" height="16"><path d="M0 0.5 H15 M0 3.5 H15 M0 6.5 H15 M0 9.5 H15 M0 12.5 H15" stroke="#e6e6e6" stroke-width="1" fill="none" shape-rendering="crispEdges"/><circle cx="7.500" cy="6.500" r="5.600" fill="#4a4a4a"/><circle cx="7.500" cy="6.500" r="4.200" fill="#c0c0c0"/></svg>
<svg style="left:892px;top:62px" width="16" height="16"><path d="M0 0.5 H15 M0 3.5 H15 M0 10.5 H15 M0 13.5 H15" stroke="#e6e6e6" stroke-width="1" fill="none" shape-rendering="crispEdges"/><rect x="4" y="5" width="7" height="4" fill="#d0d0d0"/></svg>
<div class="a" style="left:914px;top:40px;width:1px;height:38px;background:#3b3b3b"></div><div class="a" style="left:915px;top:40px;width:1px;height:38px;background:#545454"></div>
<svg style="left:920px;top:41px" width="15" height="15"><rect x="2.300" y="2.300" width="9.900" height="9.900" fill="#7d7d7d" stroke="#e4e4e4" stroke-width="1.200"/><g fill="#5aa8ea"><rect x="0" y="0" width="3.400" height="3.400"/><rect x="11.100" y="0" width="3.400" height="3.400"/><rect x="0" y="11.100" width="3.400" height="3.400"/><rect x="11.100" y="11.100" width="3.400" height="3.400"/></g></svg>
<div class="a" style="left:940px;top:41px;width:13px;height:14px;background:#585858;border:1px solid #333"></div><svg style="left:940px;top:41px" width="13" height="14"><path d="M3.3 5.500 l3.200 -3.600 l3.200 3.600z M3.3 8.5 l3.200 3.600 l3.200 -3.600z" fill="#e8e8e8"/><path d="M1 7.0 H12" stroke="#3a3a3a"/></svg>
<div class="fld" style="left:955px;top:41px;width:48px;height:14px;background:#a1a1a1;color:#111;font-size:9.5px;line-height:11px;padding:0.500px 0 0 3px"><span style="display:inline-block;transform:scaleX(0.95);transform-origin:0 0;-webkit-text-stroke:0.200px currentColor">4,233 mm</span></div>
<div class="fld" style="left:940px;top:62px;width:28px;height:14px;background:#a1a1a1;color:#111;font-size:9.5px;line-height:11px;padding:0.500px 0 0 3px"><span style="display:inline-block;transform:scaleX(1);transform-origin:0 0;-webkit-text-stroke:0.200px currentColor"></span></div>
<svg style="left:943px;top:64px" width="22" height="10"><path d="M0 1.500 H16.500 V9" stroke="#111" stroke-width="1.600" fill="none"/></svg>
<div class="a" style="left:967px;top:62px;width:14px;height:14px;background:#555;border:1px solid #333;border-left-color:#444"></div><svg style="left:967px;top:62px" width="14" height="14"><path d="M3.2 4.7 h7.600 l-3.800 5z" fill="#ececec"/></svg>
<div class="a" style="left:1011px;top:40px;width:1px;height:38px;background:#3b3b3b"></div><div class="a" style="left:1012px;top:40px;width:1px;height:38px;background:#545454"></div>
<svg style="left:1019px;top:41px" width="18" height="15"><rect x="1.500" y="1.500" width="8.500" height="8.500" fill="none" stroke="#dcdcdc" stroke-width="0.800" stroke-dasharray="1 1"/><g fill="#4a4a4a" stroke="#f0f0f0" stroke-width="0.900"><rect x="0.30" y="0.30" width="2.400" height="2.400" rx="0.800"/><rect x="4.55" y="0.30" width="2.400" height="2.400" rx="0.800"/><rect x="8.80" y="0.30" width="2.400" height="2.400" rx="0.800"/><rect x="0.30" y="4.55" width="2.400" height="2.400" rx="0.800"/><rect x="8.80" y="4.55" width="2.400" height="2.400" rx="0.800"/><rect x="0.30" y="8.80" width="2.400" height="2.400" rx="0.800"/><rect x="4.55" y="8.80" width="2.400" height="2.400" rx="0.800"/><rect x="8.80" y="8.80" width="2.400" height="2.400" rx="0.800"/></g><path d="M11.800 11.200 h3.400 l-1.700 2.200z" fill="#e6e6e6"/></svg>
<div class="fld" style="left:1040px;top:40px;width:118px;height:15px;background:#a1a1a1;color:#111;font-size:9.5px;line-height:11px;padding:1.500px 0 0 3px"><span style="display:inline-block;transform:scaleX(0.95);transform-origin:0 0;-webkit-text-stroke:0.200px currentColor">[Einfacher Grafikrahmen]+</span></div>
<div class="a" style="left:1157px;top:40px;width:14px;height:15px;background:#555;border:1px solid #333;border-left-color:#444"></div><svg style="left:1157px;top:40px" width="14" height="15"><path d="M3.2 5.2 h7.600 l-3.800 5z" fill="#ececec"/></svg>
<svg style="left:1121px;top:64px" width="52" height="14"><g fill="none" stroke="#8a8a8a"><rect x="4.500" y="4.500" width="7" height="7" fill="#3a3a3a"/><rect x="1.500" y="1.500" width="7" height="7" fill="#6a6a6a"/><path d="M17.500 10.500 H20 A3 3 0 0 0 20 4.500 H16.500" stroke-width="1.200"/><path d="M18 2.500 L15.500 4.500 L18 6.500z" fill="#8a8a8a" stroke="none"/></g><rect x="30" y="1.500" width="10" height="10" fill="#e0e0e0"/><rect x="32" y="3.500" width="6" height="6" fill="#444"/><g fill="#444"><rect x="34" y="1" width="2" height="2"/><rect x="34" y="10" width="2" height="2"/><rect x="29.500" y="5.500" width="2" height="2"/><rect x="38.500" y="5.500" width="2" height="2"/></g><path d="M42.500 10.500 L48.500 3.500 M45 4 L48 7.500 M46.500 2 l0.500 1" stroke="#d0d0d0" stroke-width="1.100" fill="none"/></svg>
<div class="a" style="left:1177px;top:40px;width:1px;height:38px;background:#3b3b3b"></div><div class="a" style="left:1178px;top:40px;width:1px;height:38px;background:#545454"></div>
<div class="a" style="left:1894px;top:40px;width:1px;height:38px;background:#3b3b3b"></div>
<svg style="left:1873px;top:49px" width="14" height="20"><path d="M8.500 0.500 L2 10.500 H8.500 L5.500 19 M8.500 0.500 L10.500 1.500 L5.500 9 H11.500 L5.500 19" fill="#d6d6d6" stroke="#d6d6d6" stroke-width="0.600" stroke-linejoin="round"/></svg>
<svg style="left:1899px;top:53px" width="16" height="10"><path d="M0 2.500 h4.600 l-2.300 3z" fill="#d0d0d0"/><path d="M6 1.500 H15 M6 4.500 H15 M6 7.500 H15" stroke="#d8d8d8" stroke-width="1.200"/></svg>
<!-- tools panel -->
<div class="a" style="left:0;top:83px;width:55px;height:12px;background:#2f2f2f"></div>
<div class="a" style="left:0;top:95px;width:55px;height:369px;background:#494949;border-top:1px solid #5c5c5c;border-bottom:1px solid #3a3a3a"></div>
<svg style="left:0;top:0" width="56" height="470">
<path d="M7 85.500 v6 l-3.400 -3z M11.500 85.500 v6 l-3.400 -3z" fill="#d0d0d0"/>
<path d="M18.500 98 v4 M20.500 98 v4 M22.500 98 v4 M24.500 98 v4 M26.500 98 v4 M28.500 98 v4 M30.500 98 v4 M32.500 98 v4 M34.500 98 v4 M36.500 98 v4" stroke="#1c1c1c"/>
<!-- selected bg -->
<rect x="3.500" y="111.500" width="23" height="19" fill="#2f2f2f" stroke="#3a3a3a"/>
<!-- selection arrow -->
<path d="M10.500 113.500 V126 L13.500 123.300 L15.700 128 L17.600 127.200 L15.500 122.600 L19.500 122.300z" fill="#111" stroke="#f2f2f2" stroke-width="1.200" stroke-linejoin="miter"/>
<!-- direct selection -->
<path d="M36 113.500 V126.500 L39.200 123.600 L41.500 128.500 L43.500 127.600 L41.300 122.800 L45.500 122.500z" fill="#d2d2d2"/>
<!-- page tool -->
<path d="M9.500 135.500 H17 L20.500 139 V148.500 H9.500z" fill="#c8c8c8"/><path d="M17 135.500 V139 H20.500z" fill="#8a8a8a"/>
<path d="M18.500 142 V150.500 L20.500 148.700 L21.800 151.500 L23 151 L21.700 148.200 L24 148z" fill="#f0f0f0" stroke="#494949" stroke-width="0.600"/>
<!-- gap tool -->
<path d="M30.800 135.500 V149 M49 135.500 V149" stroke="#d8d8d8" stroke-width="1.500"/><path d="M35 142.300 H45" stroke="#f0f0f0" stroke-width="1.500"/><path d="M33 142.300 L37 138.800 V145.800z M47 142.300 L43 138.800 V145.800z" fill="#f0f0f0"/>
<!-- content collector -->
<g fill="#d0d0d0"><path d="M8.500 160 V170 H21.500 V160 H20 V163 H10 V160z"/><path d="M13.500 160.500 L9.500 156.500" stroke="#d0d0d0" stroke-width="1.600"/><path d="M14.800 157.500 V162 H10.500z"/>
<path d="M33.500 160 V170 H46.500 V160 H45 V163 H35 V160z"/><path d="M41 160.500 L45.500 156" stroke="#d0d0d0" stroke-width="1.600"/><path d="M42.500 155 H47 V159.500z"/></g>
<g fill="#494949"><rect x="10.500" y="165" width="2" height="2"/><rect x="14" y="165" width="2" height="2"/><rect x="17.500" y="165" width="2" height="2"/><rect x="35.500" y="165" width="2" height="2"/><rect x="39" y="165" width="2" height="2"/><rect x="42.500" y="165" width="2" height="2"/></g>
<!-- separators -->
<g stroke="#3a3a3a"><path d="M0 176.500 H55 M0 246.500 H55 M0 295.500 H55 M0 344.500 H55"/></g>
<g stroke="#565656"><path d="M0 177.500 H55 M0 247.500 H55 M0 296.500 H55 M0 345.500 H55"/></g>
<!-- line tool -->
<path d="M33.500 196.500 L46 185" stroke="#e0e0e0" stroke-width="1.300"/>
<!-- pen -->
<path d="M8 219 L10 210.500 L15.500 206.500 L21.500 212 L17.500 217.500z" fill="#b8b8b8" stroke="#e0e0e0" stroke-width="0.800"/><path d="M8 219 L14.500 212.500" stroke="#494949" stroke-width="1"/><circle cx="15" cy="212.200" r="1.200" fill="#494949"/><path d="M16.500 205.500 L19 203.500 L24 208.500 L22.300 211z" fill="#e0e0e0"/>
<!-- pencil -->
<path d="M33 219 L34.500 214 L43 205.500 Q45 204 46.500 205.500 Q48 207.500 46.500 209 L38 217.500z" fill="#b0b0b0" stroke="#d8d8d8" stroke-width="0.700"/><path d="M33 219 L34.500 214 L38 217.500z" fill="#e8e8e8"/><path d="M41.500 207 L45 210.500" stroke="#666" stroke-width="1"/>
<!-- rect frame -->
<rect x="8.500" y="227.500" width="13" height="11" fill="#6a6a6a" stroke="#dcdcdc" stroke-width="1.200"/><path d="M8.500 227.500 L21.500 238.500 M21.500 227.500 L8.500 238.500" stroke="#dcdcdc" stroke-width="1"/>
<!-- rect -->
<rect x="33.500" y="227.500" width="13" height="11" fill="#8a8a8a" stroke="#dcdcdc" stroke-width="1.200"/>
<!-- small corner triangles -->
<g fill="#e6e6e6"><path d="M25 196 v2.600 h-2.600z M25 217.500 v2.600 h-2.600z M49.500 217.500 v2.600 h-2.600z M25 239 v2.600 h-2.600z M49.500 239 v2.600 h-2.600z M49.500 266.500 v2.600 h-2.600z M49.500 315.500 v2.600 h-2.600z M49.500 433 v2.600 h-2.600z M49.500 456 v2.600 h-2.600z"/></g>
<!-- scissors -->
<g fill="none" stroke="#e0e0e0" stroke-width="1.400"><circle cx="20.500" cy="257" r="2.300"/><circle cx="20.500" cy="264.500" r="2.300"/><path d="M18.500 258.200 L7 264.500 M18.500 263.300 L7 257"/></g>
<!-- free transform -->
<path d="M36.500 259 H48.500 L44.500 267 H32.500z" fill="#6e6e6e" stroke="#e0e0e0" stroke-width="1.100"/><path d="M32.500 267 V259 M32.500 267 H44.500" stroke="#e0e0e0" stroke-dasharray="1.500 1"/><path d="M36 255 H43" stroke="#e8e8e8" stroke-width="1.300"/><path d="M42 252.500 L45.500 255 L42 257.500z" fill="#e8e8e8"/>
<!-- gradient swatch -->
<defs><linearGradient id="gr1"><stop offset="0" stop-color="#e8e8e8"/><stop offset="1" stop-color="#3a3a3a"/></linearGradient>
<linearGradient id="gr2"><stop offset="0" stop-color="#fff"/><stop offset="1" stop-color="#555"/></linearGradient></defs>
<rect x="7.500" y="276.500" width="15" height="11" fill="url(#gr1)" stroke="#dcdcdc"/>
<!-- gradient feather -->
<rect x="32.500" y="276.500" width="15" height="11" fill="#8a8a8a" stroke="#dcdcdc"/>
<g fill="#e8e8e8"><rect x="33" y="277" width="3" height="3"/><rect x="39" y="277" width="3" height="3"/><rect x="45" y="277" width="2" height="3"/><rect x="36" y="280" width="3" height="3"/><rect x="42" y="280" width="3" height="3"/></g>
<g fill="#555"><rect x="36" y="277" width="3" height="3"/><rect x="42" y="277" width="3" height="3"/><rect x="33" y="280" width="3" height="3"/><rect x="39" y="280" width="3" height="3"/></g>
<!-- note -->
<path d="M8.500 303.500 H21.500 V313 L17.500 317 H8.500z" fill="#c8c8c8"/><path d="M17.500 317 V313 H21.500z" fill="#f0f0f0"/><path d="M11 307.500 H19 M11 309.800 H19 M11 312 H16" stroke="#494949" stroke-width="1.100"/>
<!-- eyedropper -->
<path d="M32 316 L33 312.500 L40.500 305 L43.500 308 L36 315.500z" fill="none" stroke="#e0e0e0" stroke-width="1.100"/><path d="M40 304 L44.500 308.500 M41.500 306 L44.500 302.500 Q46.500 301 47.500 302.500 Q48.500 304 47 305.500 L43.500 308.500" stroke="#e0e0e0" stroke-width="1.800" fill="#e0e0e0"/><path d="M31.500 317.500 H44.500" stroke="#e0e0e0" stroke-width="2.400" stroke-dasharray="2.200 1"/>
<!-- hand -->
<path d="M10.500 338 L7 330.500 Q6.500 329 8 329 L10.500 331.500 V325 Q11.500 323.500 12.500 325 V329.500 L13 323.500 Q14 322 15 323.500 V329.500 L16.500 324.500 Q17.500 323.500 18.500 325 L18 330.500 L20 327.500 Q21.500 327 21.500 328.500 L19.500 335 L18.500 338z" fill="#d4d4d4"/>
<!-- zoom -->
<circle cx="38.500" cy="329" r="5" fill="#7a7a7a" stroke="#dcdcdc" stroke-width="1.400"/><path d="M42 333 L47.500 338.500" stroke="#dcdcdc" stroke-width="2.400"/>
<!-- fill/stroke -->
<rect x="20.500" y="366.500" width="25" height="25" fill="#fff"/>
<rect x="26" y="372" width="13" height="13" fill="#494949"/>
<path d="M21.500 390.500 L44.500 367.500" stroke="#d9321e" stroke-width="1.900"/>
<rect x="7.500" y="353.500" width="27" height="27" fill="#000" stroke="#6e6e6e" stroke-width="1.400"/>
<path d="M39 354.500 Q44 353.500 45.500 358.500" fill="none" stroke="#9fc4e8" stroke-width="1.300"/><path d="M38 352.500 v4.500 l3.500 -2z" fill="#e8e8e8"/><path d="M43.500 358 h4.500 l-2.300 3.500z" fill="#e8e8e8"/>
<rect x="9.500" y="388.500" width="7" height="7" fill="#333" stroke="#e0e0e0"/><rect x="6.500" y="385.500" width="7" height="7" fill="#fff" stroke="#e0e0e0"/><path d="M7 392 L13 386" stroke="#d9321e" stroke-width="1.200"/>
<!-- formatting affects -->
<rect x="8.500" y="396.500" width="16" height="16" fill="#2f2f2f"/><rect x="12.500" y="400.500" width="8" height="8" fill="#7a7a7a" stroke="#e0e0e0" stroke-width="1.100"/>
<!-- apply color row -->
<rect x="3.500" y="418.500" width="16" height="18" fill="#2f2f2f"/><rect x="6.500" y="422.500" width="10" height="10" fill="#000" stroke="#9a9a9a"/>
<rect x="23.500" y="423.500" width="8" height="9" fill="url(#gr2)" stroke="#777" stroke-width="0.600"/>
<rect x="39.500" y="423.500" width="9" height="9" fill="#fff"/><path d="M40 432 L48 424" stroke="#d9321e" stroke-width="1.600"/>
<!-- view modes -->
<rect x="3.500" y="441.500" width="23" height="19" fill="#2f2f2f"/>
<rect x="10.500" y="446.500" width="10" height="9.500" fill="#444" stroke="#e0e0e0" stroke-width="1.100"/><path d="M10.500 448.300 H20.500" stroke="#e0e0e0"/><rect x="13" y="450" width="3.500" height="2.200" fill="#fff"/><rect x="15.500" y="451.800" width="3.500" height="2.200" fill="#fff"/>
<rect x="35.500" y="446.500" width="10.500" height="9.500" fill="#5a5a5a" stroke="#d8d8d8" stroke-width="1.100"/><path d="M35.500 448.500 H46" stroke="#d8d8d8"/>
</svg>
<div class="t" style="left:8.800px;top:180.500px;font-family:'Liberation Serif',serif;font-size:19px;color:#e4e4e4">T</div>
<div class="t" style="left:33.500px;top:397px;font-family:'Liberation Serif',serif;font-size:15px;font-weight:bold;color:#e4e4e4">T</div>
<div class="a" style="left:1754px;top:83px;width:166px;height:900px;background:#484848"></div>
<div class="a" style="left:1754px;top:83px;width:166px;height:13px;background:#2f2f2f"></div>
<svg style="left:1905px;top:86px" width="10" height="7"><path d="M4 0 v6 l-3.600 -3z M9 0 v6 l-3.600 -3z" fill="#d0d0d0"/></svg>
<div class="a" style="left:1754px;top:95px;width:166px;height:1px;background:#333"></div><div class="a" style="left:1754px;top:96px;width:166px;height:1px;background:#5a5a5a"></div>
<svg style="left:1826px;top:99px" width="20" height="4"><path d="M0.5 0 v4 M2.5 0 v4 M4.5 0 v4 M6.5 0 v4 M8.5 0 v4 M10.5 0 v4 M12.5 0 v4 M14.5 0 v4 M16.5 0 v4 M18.5 0 v4" stroke="#1c1c1c"/></svg>
<svg style="left:1764px;top:110.9px" width="18" height="16"><path d="M1 4 L3.500 1.500 H8 V14 H1z M10 1.500 H14.500 L17 4 V14 H10z" fill="#d6d6d6"/><path d="M9 0 V16" stroke="#f0f0f0" stroke-width="1"/></svg>
<div class="t" style="left:1791px;top:114.0px;font-size:11px;font-weight:bold;color:#ececec;transform:scaleX(0.98);transform-origin:0 0">Seiten</div>
<svg style="left:1764px;top:138.9px" width="18" height="16"><path d="M9 0.500 L17 5 L9 9.500 L1 5z" fill="#d6d6d6"/><path d="M1.500 8.500 L9 12.800 L16.500 8.500" fill="none" stroke="#d6d6d6" stroke-width="1.800"/></svg>
<div class="t" style="left:1791px;top:142.0px;font-size:11px;font-weight:bold;color:#ececec;transform:scaleX(0.98);transform-origin:0 0">Ebenen</div>
<svg style="left:1764px;top:166.9px" width="18" height="16"><g fill="none" stroke="#d6d6d6" stroke-width="1.800"><path d="M7 4 H4.500 A3.500 3.500 0 0 0 4.500 11 H7"/><path d="M11 4 H13.500 A3.500 3.500 0 0 1 13.500 11 H11"/><path d="M5.500 7.500 H12.500"/></g></svg>
<div class="t" style="left:1791px;top:170.0px;font-size:11px;font-weight:bold;color:#ececec;transform:scaleX(0.98);transform-origin:0 0">Verknüpfungen</div>
<div class="a" style="left:1754px;top:191px;width:166px;height:1px;background:#333"></div><div class="a" style="left:1754px;top:192px;width:166px;height:1px;background:#5a5a5a"></div>
<svg style="left:1826px;top:195px" width="20" height="4"><path d="M0.5 0 v4 M2.5 0 v4 M4.5 0 v4 M6.5 0 v4 M8.5 0 v4 M10.5 0 v4 M12.5 0 v4 M14.5 0 v4 M16.5 0 v4 M18.5 0 v4" stroke="#1c1c1c"/></svg>
<svg style="left:1764px;top:208.0px" width="18" height="16"><rect x="1.500" y="2.500" width="15" height="10" fill="#c8c8c8" stroke="#d6d6d6"/><rect x="2" y="3" width="4.700" height="4.500" fill="#333"/><rect x="7" y="3" width="4.700" height="4.500" fill="#555"/><rect x="12" y="3" width="4" height="4.500" fill="#999"/><rect x="2" y="8" width="4.700" height="4" fill="#aaa"/><rect x="7" y="8" width="4.700" height="4" fill="#888"/><rect x="12" y="8" width="4" height="4" fill="#444"/><path d="M6.800 3 V12 M11.800 3 V12 M2 7.700 H16" stroke="#ddd" stroke-width="0.700"/></svg>
<div class="t" style="left:1791px;top:211.1px;font-size:11px;font-weight:bold;color:#ececec;transform:scaleX(0.98);transform-origin:0 0">Farbfelder</div>
<svg style="left:1764px;top:236.0px" width="18" height="16"><path d="M1 3 H17" stroke="#d6d6d6" stroke-width="1"/><path d="M1 7.500 H17" stroke="#d6d6d6" stroke-width="2"/><path d="M1 12.500 H17" stroke="#d6d6d6" stroke-width="3"/></svg>
<div class="t" style="left:1791px;top:239.1px;font-size:11px;font-weight:bold;color:#ececec;transform:scaleX(0.98);transform-origin:0 0">Kontur</div>
<svg style="left:1764px;top:264.0px" width="18" height="16"><defs><linearGradient id="pg"><stop offset="0" stop-color="#2a2a2a"/><stop offset="1" stop-color="#e8e8e8"/></linearGradient></defs><rect x="1.500" y="2.500" width="15" height="10" fill="url(#pg)" stroke="#d6d6d6"/></svg>
<div class="t" style="left:1791px;top:267.1px;font-size:11px;font-weight:bold;color:#ececec;transform:scaleX(0.98);transform-origin:0 0">Verlauf</div>
<div class="a" style="left:1754px;top:288px;width:166px;height:1px;background:#333"></div><div class="a" style="left:1754px;top:289px;width:166px;height:1px;background:#5a5a5a"></div>
<svg style="left:1826px;top:292px" width="20" height="4"><path d="M0.5 0 v4 M2.5 0 v4 M4.5 0 v4 M6.5 0 v4 M8.5 0 v4 M10.5 0 v4 M12.5 0 v4 M14.5 0 v4 M16.5 0 v4 M18.5 0 v4" stroke="#1c1c1c"/></svg>
<svg style="left:1764px;top:304.9px" width="18" height="16"></svg>
<div class="t" style="left:1791px;top:308.0px;font-size:11px;font-weight:bold;color:#ececec;transform:scaleX(0.98);transform-origin:0 0">Effekte</div>
<div class="t" style="left:1765.500px;top:302.9px;font-size:18px;font-style:italic;font-family:'Liberation Serif',serif;color:#d6d6d6;letter-spacing:-1px">f<span style="font-family:'Liberation Sans',sans-serif;font-size:14px">x</span></div>
<div class="a" style="left:1754px;top:330px;width:166px;height:1px;background:#333"></div><div class="a" style="left:1754px;top:331px;width:166px;height:1px;background:#5a5a5a"></div>
<svg style="left:1826px;top:334px" width="20" height="4"><path d="M0.5 0 v4 M2.5 0 v4 M4.5 0 v4 M6.5 0 v4 M8.5 0 v4 M10.5 0 v4 M12.5 0 v4 M14.5 0 v4 M16.5 0 v4 M18.5 0 v4" stroke="#1c1c1c"/></svg>
<svg style="left:1764px;top:346.4px" width="18" height="16"><rect x="4" y="10" width="5" height="5" fill="#484848" stroke="#d6d6d6"/><rect x="1.500" y="7.500" width="5" height="5" fill="#484848" stroke="#d6d6d6"/></svg>
<div class="t" style="left:1791px;top:349.5px;font-size:11px;font-weight:bold;color:#ececec;transform:scaleX(0.98);transform-origin:0 0">Zeichenformate</div>
<div class="t" style="left:1772.500px;top:344.4px;font-size:14px;color:#d6d6d6">A</div>
<svg style="left:1764px;top:374.4px" width="18" height="16"><path d="M12.500 1.500 V13 M15 1.500 V13 M12.500 1.500 H16.500" stroke="#d6d6d6" stroke-width="1.300" fill="none"/><path d="M12.500 1.200 A3.200 3.200 0 0 0 12.500 7.600z" fill="#d6d6d6"/><rect x="4" y="10" width="5" height="5" fill="#484848" stroke="#d6d6d6"/><rect x="1.500" y="7.500" width="5" height="5" fill="#484848" stroke="#d6d6d6"/></svg>
<div class="t" style="left:1791px;top:377.5px;font-size:11px;font-weight:bold;color:#ececec;transform:scaleX(0.98);transform-origin:0 0">Absatzformate</div>
<svg style="left:1764px;top:402.4px" width="18" height="16"><rect x="6.500" y="1.500" width="10" height="10" fill="#8a8a8a" stroke="#d6d6d6" stroke-dasharray="2.500 1.500"/><rect x="4" y="10" width="5" height="5" fill="#484848" stroke="#d6d6d6"/><rect x="1.500" y="7.500" width="5" height="5" fill="#484848" stroke="#d6d6d6"/></svg>
<div class="t" style="left:1791px;top:405.5px;font-size:11px;font-weight:bold;color:#ececec;transform:scaleX(0.98);transform-origin:0 0">Objektformate</div>
<div class="a" style="left:1754px;top:426px;width:166px;height:1px;background:#333"></div><div class="a" style="left:1754px;top:427px;width:166px;height:1px;background:#5a5a5a"></div>
<svg style="left:1826px;top:430px" width="20" height="4"><path d="M0.5 0 v4 M2.5 0 v4 M4.5 0 v4 M6.5 0 v4 M8.5 0 v4 M10.5 0 v4 M12.5 0 v4 M14.5 0 v4 M16.5 0 v4 M18.5 0 v4" stroke="#1c1c1c"/></svg>
<svg style="left:1764px;top:443.2px" width="18" height="16"><rect x="2.500" y="1.500" width="14" height="12" fill="none" stroke="#d6d6d6" stroke-width="1.200"/><path d="M2.500 4.500 H16.500 M2.500 7.500 H16.500 M2.500 10.500 H16.500 M6.500 4.500 V13.500" stroke="#d6d6d6"/><rect x="2.500" y="1.500" width="14" height="3" fill="#d6d6d6"/></svg>
<div class="t" style="left:1791px;top:446.3px;font-size:11px;font-weight:bold;color:#ececec;transform:scaleX(0.98);transform-origin:0 0">Tabelle</div>
<svg style="left:1764px;top:471.2px" width="18" height="16"><rect x="6.500" y="0.500" width="10" height="10" fill="none" stroke="#d6d6d6"/><path d="M6.500 3.500 H16.500 M6.500 6 H16.500 M6.500 8.500 H16.500 M10 3.500 V10.500" stroke="#d6d6d6" stroke-width="0.900"/><rect x="6.500" y="0.500" width="10" height="2.500" fill="#d6d6d6"/><rect x="4" y="10" width="5" height="5" fill="#484848" stroke="#d6d6d6"/><rect x="1.500" y="7.500" width="5" height="5" fill="#484848" stroke="#d6d6d6"/></svg>
<div class="t" style="left:1791px;top:474.3px;font-size:11px;font-weight:bold;color:#ececec;transform:scaleX(0.98);transform-origin:0 0">Tabellenformate</div>
<svg style="left:1764px;top:499.2px" width="18" height="16"><rect x="6.500" y="0.500" width="10" height="10" fill="none" stroke="#d6d6d6"/><rect x="6.500" y="0.500" width="10" height="2.500" fill="#d6d6d6"/><rect x="10" y="5" width="6" height="5" fill="#d6d6d6"/><rect x="4" y="10" width="5" height="5" fill="#484848" stroke="#d6d6d6"/><rect x="1.500" y="7.500" width="5" height="5" fill="#484848" stroke="#d6d6d6"/></svg>
<div class="t" style="left:1791px;top:502.3px;font-size:11px;font-weight:bold;color:#ececec;transform:scaleX(0.98);transform-origin:0 0">Zellenformate</div>
<div class="a" style="left:1754px;top:523px;width:166px;height:1px;background:#333"></div><div class="a" style="left:1754px;top:524px;width:166px;height:1px;background:#5a5a5a"></div>
<svg style="left:1826px;top:527px" width="20" height="4"><path d="M0.5 0 v4 M2.5 0 v4 M4.5 0 v4 M6.5 0 v4 M8.5 0 v4 M10.5 0 v4 M12.5 0 v4 M14.5 0 v4 M16.5 0 v4 M18.5 0 v4" stroke="#1c1c1c"/></svg>
<svg style="left:1764px;top:540.2px" width="18" height="16"><path d="M6.500 0.500 H11.500 L14.500 3.500 V9 H6.500z" fill="none" stroke="#d6d6d6" stroke-width="1.100"/><path d="M0 6 H5" stroke="#d6d6d6" stroke-width="1.600"/><path d="M4 3.200 L7.500 6 L4 8.800z" fill="#d6d6d6"/><circle cx="12" cy="12" r="3" fill="none" stroke="#d6d6d6" stroke-width="2.400" stroke-dasharray="1.500 1.200"/><circle cx="12" cy="12" r="1.800" fill="#d6d6d6"/></svg>
<div class="t" style="left:1791px;top:543.3px;font-size:11px;font-weight:bold;color:#ececec;transform:scaleX(0.98);transform-origin:0 0">Datenzusammenführ...</div>
<svg style="left:1764px;top:568.2px" width="18" height="16"><path d="M13.500 1 Q6 0 5.500 3.500 Q5.500 6 10 7.500 Q13 8.500 11.500 10.500 L3 12 Q5 15.500 10 15 Q16.500 13.500 15 9 Q13.500 6.500 9.500 5.500 Q8 4.500 10 3.500z" fill="#d6d6d6"/><path d="M2.500 9 L9 9.500 L4 13z" fill="#8a8a8a"/></svg>
<div class="t" style="left:1791px;top:571.3px;font-size:11px;font-weight:bold;color:#ececec;transform:scaleX(0.98);transform-origin:0 0">Skripte</div>
<div class="a" style="left:1754px;top:592px;width:166px;height:1px;background:#333"></div><div class="a" style="left:1754px;top:593px;width:166px;height:1px;background:#5a5a5a"></div>
<svg style="left:1826px;top:596px" width="20" height="4"><path d="M0.5 0 v4 M2.5 0 v4 M4.5 0 v4 M6.5 0 v4 M8.5 0 v4 M10.5 0 v4 M12.5 0 v4 M14.5 0 v4 M16.5 0 v4 M18.5 0 v4" stroke="#1c1c1c"/></svg>
<svg style="left:1764px;top:609.3px" width="18" height="16"></svg>
<div class="t" style="left:1791px;top:612.4px;font-size:11px;font-weight:bold;color:#ececec;transform:scaleX(0.98);transform-origin:0 0">Glyphen</div>
<div class="t" style="left:1764.500px;top:607.3px;font-size:19px;font-style:italic;font-family:'Liberation Serif',serif;color:#d6d6d6">A</div>
<svg style="left:1764px;top:637.3px" width="18" height="16"><path d="M15.500 0.500 V15.500" stroke="#d6d6d6" stroke-width="1.100"/></svg>
<div class="t" style="left:1791px;top:640.4px;font-size:11px;font-weight:bold;color:#ececec;transform:scaleX(0.98);transform-origin:0 0">Zeichen</div>
<div class="t" style="left:1764.500px;top:636.3px;font-size:17px;color:#d6d6d6">A</div>
<svg style="left:1764px;top:665.3px" width="18" height="16"><path d="M9 1.500 V14.500 M12 1.500 V14.500 M8 1.500 H14.500" stroke="#d6d6d6" stroke-width="1.400" fill="none"/><path d="M9 1 A3.700 3.700 0 0 0 9 8.400z" fill="#d6d6d6" stroke="#d6d6d6"/></svg>
<div class="t" style="left:1791px;top:668.4px;font-size:11px;font-weight:bold;color:#ececec;transform:scaleX(0.98);transform-origin:0 0">Absatz</div>
<div class="a" style="left:1754px;top:690px;width:166px;height:1px;background:#333"></div><div class="a" style="left:1754px;top:691px;width:166px;height:1px;background:#5a5a5a"></div>
<div class="a" style="left:122px;top:436px;width:209px;height:367px;background:#4b4b4b;border:1px solid #2a2a2a;border-radius:4px 4px 0 0;box-shadow:0 5px 14px rgba(0,0,0,0.3);overflow:hidden">
<div class="a" style="left:0;top:0;width:209px;height:12px;background:#2c2c2c"></div>
<div class="a" style="left:0;top:12px;width:209px;height:18px;background:#333;border-bottom:1px solid #2a2a2a"></div>
<div class="a" style="left:0;top:12px;width:76px;height:19px;background:#4b4b4b;border-right:1px solid #2a2a2a;border-top:1px solid #5a5a5a"></div>
<div class="a" style="left:77px;top:12px;width:66px;height:18px;background:#393939;border-right:1px solid #2a2a2a;border-top:1px solid #454545"></div>
<div class="a" style="left:0;top:223px;width:209px;height:2px;background:#2a2a2a"></div>
<div class="a" style="left:0;top:225px;width:209px;height:18px;background:#333;border-bottom:1px solid #2a2a2a"></div>
<div class="a" style="left:0;top:225px;width:93px;height:19px;background:#4b4b4b;border-right:1px solid #2a2a2a;border-top:1px solid #5a5a5a"></div>
</div>
<svg style="left:128px;top:439px" width="8" height="7"><path d="M1 0.800 L6 5.800 M6 0.800 L1 5.800" stroke="#e0e0e0" stroke-width="1.300"/></svg>
<svg style="left:317px;top:439px" width="9" height="7"><path d="M3.600 0.300 v6 l-3.400 -3z M8 0.300 v6 l-3.400 -3z" fill="#d0d0d0"/></svg>
<svg style="left:127px;top:452px" width="7" height="11"><path d="M0.800 4 L3.500 1 L6.200 4 M0.800 7 L3.500 10 L6.200 7" fill="none" stroke="#e0e0e0" stroke-width="1.100"/></svg>
<svg style="left:127px;top:665px" width="7" height="11"><path d="M0.800 4 L3.500 1 L6.200 4 M0.800 7 L3.500 10 L6.200 7" fill="none" stroke="#e0e0e0" stroke-width="1.100"/></svg>
<div class="t" style="left:136px;top:452px;font-size:11px;font-weight:bold;color:#f0f0f0;transform:scaleX(0.96);transform-origin:0 0">Ausrichten</div>
<div class="t" style="left:205px;top:452px;font-size:11px;font-weight:bold;color:#a2a2a2;transform:scaleX(0.96);transform-origin:0 0">Pathfinder</div>
<div class="t" style="left:136px;top:665px;font-size:11px;font-weight:bold;color:#f0f0f0;transform:scaleX(0.98);transform-origin:0 0">Informationen</div>
<svg style="left:312px;top:454px" width="15" height="8"><path d="M0 1.500 h4 l-2 2.600z" fill="#d0d0d0"/><path d="M5.500 0.500 H14 M5.500 2.800 H14 M5.500 5.100 H14 M5.500 7.400 H14" stroke="#d0d0d0" stroke-width="1"/></svg>
<svg style="left:312px;top:667px" width="15" height="8"><path d="M0 1.500 h4 l-2 2.600z" fill="#d0d0d0"/><path d="M5.500 0.500 H14 M5.500 2.800 H14 M5.500 5.100 H14 M5.500 7.400 H14" stroke="#d0d0d0" stroke-width="1"/></svg>
<div class="t" style="left:127.0px;top:473.8px;font-size:9.1px;color:#e4e4e4;-webkit-text-stroke:0.150px #e4e4e4;">Objekte ausrichten:</div>
<div class="t" style="left:127.0px;top:513.8px;font-size:9.1px;color:#e4e4e4;-webkit-text-stroke:0.150px #e4e4e4;">Objekte verteilen:</div>
<div class="t" style="left:128.0px;top:603.8px;font-size:9.1px;color:#e4e4e4;-webkit-text-stroke:0.150px #e4e4e4;">Abstand verteilen:</div>
<div class="a" style="left:127px;top:508px;width:198px;height:1px;background:#3a3a3a"></div><div class="a" style="left:127px;top:509px;width:198px;height:1px;background:#555"></div>
<div class="a" style="left:127px;top:596px;width:198px;height:1px;background:#3a3a3a"></div><div class="a" style="left:127px;top:597px;width:198px;height:1px;background:#555"></div>
<svg style="left:132px;top:487px" width="18" height="18"><g fill="none" stroke="#e6e6e6" stroke-width="1"><path d="M1.500 0.500 V15.500"/><rect x="3.500" y="2.500" width="6" height="4" fill="#d2d2d2" stroke="none"/><rect x="3.500" y="9.500" width="10" height="4"/></g></svg>
<svg style="left:165px;top:487px" width="18" height="18"><g fill="none" stroke="#e6e6e6" stroke-width="1"><path d="M6.500 0 V16"/><rect x="3.500" y="2.500" width="6" height="4" fill="#d2d2d2" stroke="none"/><rect x="1.500" y="9.500" width="10" height="4" fill="#4b4b4b"/></g></svg>
<svg style="left:197px;top:487px" width="18" height="18"><g fill="none" stroke="#e6e6e6" stroke-width="1"><path d="M13.500 0.500 V15.500"/><rect x="5.500" y="2.500" width="6" height="4" fill="#d2d2d2" stroke="none"/><rect x="1.500" y="9.500" width="10" height="4"/></g></svg>
<svg style="left:238px;top:487px" width="18" height="18"><g fill="none" stroke="#e6e6e6" stroke-width="1"><path d="M0.500 1.500 H14.500"/><rect x="2.500" y="3.500" width="4" height="10"/><rect x="8.500" y="3.500" width="4.500" height="6" fill="#d2d2d2" stroke="none"/></g></svg>
<svg style="left:269px;top:487px" width="18" height="18"><g fill="none" stroke="#e6e6e6" stroke-width="1"><path d="M0 8.500 H16"/><rect x="3.500" y="3.500" width="4" height="10" fill="#4b4b4b"/><rect x="9.500" y="5.500" width="4.500" height="6" fill="#d2d2d2" stroke="none"/></g></svg>
<svg style="left:301px;top:487px" width="18" height="18"><g fill="none" stroke="#e6e6e6" stroke-width="1"><path d="M0.500 15.500 H14.500"/><rect x="2.500" y="3.500" width="4" height="10"/><rect x="8.500" y="7.500" width="4.500" height="6" fill="#d2d2d2" stroke="none"/></g></svg>
<svg style="left:132px;top:527px" width="18" height="18"><g fill="none" stroke="#e6e6e6" stroke-width="1"><path d="M0.500 1.500 H16.500 M0.500 9.500 H16.500"/><rect x="5.500" y="2" width="6" height="4" fill="#d2d2d2" stroke="none"/><rect x="3.500" y="10" width="10" height="4"/></g></svg>
<svg style="left:164px;top:527px" width="18" height="18"><g fill="none" stroke="#e6e6e6" stroke-width="1"><path d="M0.500 4.500 H16.500 M0.500 11.500 H16.500"/><rect x="5.500" y="2.500" width="6" height="4" fill="#d2d2d2" stroke="none"/><rect x="3.500" y="9.500" width="10" height="4" fill="#4b4b4b"/></g></svg>
<svg style="left:196px;top:527px" width="18" height="18"><g fill="none" stroke="#e6e6e6" stroke-width="1"><path d="M0.500 6.500 H16.500 M0.500 14.500 H16.500"/><rect x="5.500" y="2.500" width="6" height="4" fill="#d2d2d2" stroke="none"/><rect x="3.500" y="10.500" width="10" height="4"/></g></svg>
<svg style="left:239px;top:526px" width="18" height="18"><g fill="none" stroke="#e6e6e6" stroke-width="1"><path d="M1.500 0.500 V16.500 M8.500 0.500 V16.500"/><rect x="2" y="3.500" width="4" height="10"/><rect x="9" y="5.500" width="4.500" height="6" fill="#d2d2d2" stroke="none"/></g></svg>
<svg style="left:271px;top:526px" width="18" height="18"><g fill="none" stroke="#e6e6e6" stroke-width="1"><path d="M3.500 0.500 V16.500 M10.500 0.500 V16.500"/><rect x="1.500" y="3.500" width="4" height="10" fill="#4b4b4b"/><rect x="8.500" y="5.500" width="4.500" height="6" fill="#d2d2d2" stroke="none"/></g></svg>
<svg style="left:301px;top:526px" width="18" height="18"><g fill="none" stroke="#e6e6e6" stroke-width="1"><path d="M5.500 0.500 V16.500 M12.500 0.500 V16.500"/><rect x="8" y="3.500" width="4" height="10"/><rect x="0.500" y="5.500" width="4.500" height="6" fill="#d2d2d2" stroke="none"/></g></svg>
<svg style="left:133px;top:618px" width="18" height="18"><g fill="none" stroke="#e6e6e6" stroke-width="1"><path d="M0.500 4.500 H3.500 M0.500 8.500 H3.500"/><rect x="6.500" y="1" width="6" height="5" fill="#d2d2d2" stroke="none"/><rect x="4.500" y="9.500" width="10" height="4"/></g></svg>
<svg style="left:166px;top:617px" width="18" height="18"><g fill="none" stroke="#e6e6e6" stroke-width="1"><path d="M5.500 0.500 V3.500 M9.500 0.500 V3.500"/><rect x="1.500" y="5.500" width="4" height="10"/><rect x="8" y="5" width="5" height="6" fill="#d2d2d2" stroke="none"/></g></svg>
<div class="a" style="left:129px;top:549px;width:11px;height:11px;background:#5c5c5c;border:1px solid #2e2e2e"></div>
<div class="t" style="left:145.0px;top:551.5px;font-size:9.1px;color:#e4e4e4;-webkit-text-stroke:0.150px #e4e4e4;">Abstand verwenden</div>
<div class="a" style="left:240px;top:549px;width:13px;height:13px;background:#505050;border:1px solid #303030"></div><svg style="left:240px;top:549px" width="13" height="13"><path d="M3.500 5.200 l3 -3.400 l3 3.400z M3.500 7.800 l3 3.400 l3 -3.400z" fill="#7a7a7a"/><path d="M1 6.500 H12" stroke="#383838"/></svg>
<div class="fld" style="left:254px;top:550px;width:48px;height:13px;background:#9a9a9a;color:#bdbdbd;font-size:9.1px;padding:1.500px 0 0 3px">0 mm</div>
<div class="t" style="left:179.5px;top:576.8px;font-size:9.1px;color:#e4e4e4;-webkit-text-stroke:0.150px #e4e4e4;">Ausrichten an:</div>
<svg style="left:241px;top:571px" width="24" height="17"><path d="M1.500 0 V16" stroke="#e6e6e6"/><rect x="3.500" y="1.500" width="7" height="5" fill="none" stroke="#e6e6e6" stroke-dasharray="1.500 1"/><rect x="3.500" y="8.500" width="10" height="6" fill="none" stroke="#e6e6e6" stroke-dasharray="1.500 1"/><path d="M16 9.500 h5.600 l-2.800 3.600z" fill="#f0f0f0"/></svg>
<div class="a" style="left:130px;top:641px;width:11px;height:11px;background:#5c5c5c;border:1px solid #2e2e2e"></div><svg style="left:130px;top:638px" width="16" height="16"><path d="M2.500 6.800 L5.200 10.200 L10.800 1.500" stroke="#f4f4f4" stroke-width="1.600" fill="none"/></svg>
<div class="t" style="left:146.0px;top:642.8px;font-size:9.1px;color:#e4e4e4;-webkit-text-stroke:0.150px #e4e4e4;">Abstand verwenden</div>
<div class="a" style="left:240px;top:641px;width:13px;height:13px;background:#5c5c5c;border:1px solid #303030"></div><svg style="left:240px;top:641px" width="13" height="13"><path d="M3.500 5.200 l3 -3.400 l3 3.400z M3.500 7.800 l3 3.400 l3 -3.400z" fill="#f0f0f0"/><path d="M1 6.500 H12" stroke="#383838"/></svg>
<div class="fld" style="left:255px;top:641px;width:48px;height:13px;background:#a3a3a3;color:#111;font-size:9.1px;padding:1.500px 0 0 3px">8 mm</div>
<div class="t" style="left:146.5px;top:685.4px;font-size:9.1px;color:#e4e4e4;-webkit-text-stroke:0.150px #e4e4e4;">X:&thinsp;-134 mm</div>
<div class="t" style="left:146.5px;top:697.2px;font-size:9.1px;color:#e4e4e4;-webkit-text-stroke:0.150px #e4e4e4;">Y:&thinsp;8 mm</div>
<div class="t" style="left:146.5px;top:709.5px;font-size:9.1px;color:#e4e4e4;-webkit-text-stroke:0.150px #e4e4e4;">D:</div>
<div class="t" style="left:249.0px;top:685.4px;font-size:9.1px;color:#e4e4e4;-webkit-text-stroke:0.150px #e4e4e4;">B:</div>
<div class="t" style="left:249.0px;top:697.2px;font-size:9.1px;color:#e4e4e4;-webkit-text-stroke:0.150px #e4e4e4;">H:</div>
<svg style="left:128px;top:694px" width="11" height="11"><path d="M4.500 0 V9 M0 4.500 H9" stroke="#e8e8e8" stroke-width="1.100"/><path d="M8 6.500 v3 l2 -1.500z" fill="#e8e8e8"/></svg>
<svg style="left:230px;top:694px" width="12" height="11"><rect x="2.500" y="2.500" width="6" height="6" fill="none" stroke="#e0e0e0" stroke-dasharray="1.500 1"/><path d="M2.500 2.500 H9.500 M2.500 2.500 V9" stroke="#e0e0e0"/><path d="M8 0.500 v4 l2.500 -2z M0.500 8 h4 l-2 2.500z" fill="#e0e0e0"/></svg>
<svg style="left:246px;top:707px" width="11" height="9"><path d="M0.500 7.500 H10 L8 1 z" fill="none" stroke="#e0e0e0" stroke-width="1"/><path d="M5.500 7.500 A4 4 0 0 0 4.500 4.800" fill="none" stroke="#e0e0e0"/></svg>
<div class="a" style="left:225px;top:682px;width:1px;height:64px;background:#3a3a3a"></div><div class="a" style="left:226px;top:682px;width:1px;height:64px;background:#555"></div>
<div class="a" style="left:127px;top:721px;width:198px;height:1px;background:#3a3a3a"></div><div class="a" style="left:127px;top:722px;width:198px;height:1px;background:#555"></div>
<div class="a" style="left:127px;top:749px;width:198px;height:1px;background:#3a3a3a"></div><div class="a" style="left:127px;top:750px;width:198px;height:1px;background:#555"></div>
<div class="t" style="right:1693.5px;top:756.5px;font-size:9.1px;color:#e4e4e4;-webkit-text-stroke:0.150px #e4e4e4;">Position:</div>
<div class="t" style="left:229.0px;top:756.5px;font-size:9.1px;color:#e4e4e4;-webkit-text-stroke:0.150px #e4e4e4;">Macinto...r_Inhalt.indd</div>
<div class="t" style="right:1693.5px;top:768.6px;font-size:9.1px;color:#e4e4e4;-webkit-text-stroke:0.150px #e4e4e4;">Letzte Änderung:</div>
<div class="t" style="left:229.0px;top:768.6px;font-size:9.1px;color:#e4e4e4;-webkit-text-stroke:0.150px #e4e4e4;">10.02.15, 20:51</div>
<div class="t" style="right:1693.5px;top:781.0px;font-size:9.1px;color:#e4e4e4;-webkit-text-stroke:0.150px #e4e4e4;">Autor:</div>
<div class="t" style="right:1693.5px;top:792.8px;font-size:9.1px;color:#e4e4e4;-webkit-text-stroke:0.150px #e4e4e4;">Dateigröße:</div>
<div class="t" style="left:229.0px;top:792.8px;font-size:9.1px;color:#e4e4e4;-webkit-text-stroke:0.150px #e4e4e4;">5912 KB</div>
<div class="a" style="left:466px;top:299px;width:452px;height:368px;border-radius:5px 5px 4px 4px;box-shadow:0 20px 40px 4px rgba(0,0,0,0.48),0 0 0 0.500px rgba(0,0,0,0.25),0 3px 10px rgba(0,0,0,0.3);background:#494949;overflow:hidden"><div class="a" style="left:0;top:0;width:100%;height:22px;background:linear-gradient(#f0f0f0,#e4e4e4 45%,#d2d2d2);border-bottom:1px solid #9e9e9e"></div><div class="t" style="left:0;top:5.2px;width:100%;text-align:center;font-size:13.500px;color:#3a3a3a;letter-spacing:0.15px">Dokument einrichten</div></div>
<div class="t dt" style="right:1363.0px;top:340.9px;font-size:12px;color:#ececec;letter-spacing:0px;">Zielmedium:</div>
<div class="a dt" style="left:563px;top:338px;width:177px;height:17px;background:linear-gradient(#626262,#4b4b4b);border:1px solid #262626;box-shadow:inset 0 1px 0 #707070;color:#ececec;font-size:12px;line-height:16px;padding-left:2px" >Druck</div><div class="a" style="left:726px;top:339px;width:1px;height:15px;background:#303030"></div><svg style="left:727px;top:338px" width="13" height="17"><path d="M2.800 6.5 h7.400 l-3.700 5z" fill="#f2f2f2"/></svg>
<div class="t dt" style="right:1363.0px;top:365.9px;font-size:12px;color:#ececec;letter-spacing:0px;">Seitenanzahl:</div>
<div class="a" style="left:562px;top:361px;width:58px;height:21px;border:1.500px solid #e8933c;border-radius:1px"></div><div class="a" style="left:564px;top:363px;width:54px;height:17px;background:#a3a3a3;border:1px solid #2c2c2c;border-top-color:#1e1e1e;border-bottom-color:#555;box-shadow:inset 0 1px 0 #8c8c8c;color:#0a0a0a;font-size:12px;line-height:17px;padding-left:2px;white-space:nowrap;overflow:hidden;-webkit-text-stroke:0.250px currentColor"><span style="background:#b3d3f4;display:inline-block;padding:1px 1px 1px 0;margin:-1px 0">3</span></div>
<div class="t dt" style="right:1363.0px;top:391.4px;font-size:12px;color:#ececec;letter-spacing:0px;">Startseitennr.:</div>
<div class="a" style="left:563px;top:388px;width:55px;height:17px;background:#999;border:1px solid #2c2c2c;border-top-color:#1e1e1e;border-bottom-color:#555;box-shadow:inset 0 1px 0 #8c8c8c;color:#4a4a4a;font-size:12px;line-height:17px;padding-left:2px;white-space:nowrap;overflow:hidden;-webkit-text-stroke:0.250px currentColor">1</div>
<div class="a" style="left:655px;top:366px;width:11px;height:11px;background:#5c5c5c;border:1px solid #2e2e2e;box-shadow:inset 0 1px 1px rgba(0,0,0,0.25)"></div><svg style="left:655px;top:363px" width="16" height="16"><path d="M2.600 6.800 L5.200 10 L10.600 2" stroke="#f4f4f4" stroke-width="1.500" fill="none"/></svg>
<div class="t dt" style="left:671.5px;top:365.9px;font-size:12px;color:#ececec;letter-spacing:0px;-webkit-text-stroke:0.250px #ececec">Doppelseite</div>
<div class="a" style="left:655px;top:391px;width:11px;height:11px;background:#4e4e4e;border:1px solid #3c3c3c;box-shadow:inset 0 1px 1px rgba(0,0,0,0.25)"></div>
<div class="t dt" style="left:671.5px;top:391.4px;font-size:12px;color:#7d7d7d;letter-spacing:0px;">Primärer Textrahmen</div>
<svg style="left:482px;top:427px" width="422" height="79" shape-rendering="crispEdges"><path d="M10 0.500 H0.500 V76.5 H419.5 V0.500 H295" fill="none" stroke="#2f2f2f"/><path d="M10 1.500 H1.500 V75.5 M295 1.500 H418.5 M1.500 77.5 H420.5 M420.5 1.500 V77.5" fill="none" stroke="#5c5c5c"/></svg>
<div class="t dt" style="left:495.0px;top:420.9px;font-size:12px;color:#ececec;letter-spacing:0.05px;">Seitenformat:</div>
<div class="a dt" style="left:573px;top:418px;width:198px;height:17px;background:linear-gradient(#626262,#4b4b4b);border:1px solid #262626;box-shadow:inset 0 1px 0 #707070;color:#ececec;font-size:12px;line-height:16px;padding-left:2px" >A4</div><div class="a" style="left:757px;top:419px;width:1px;height:15px;background:#303030"></div><svg style="left:758px;top:418px" width="13" height="17"><path d="M2.800 6.5 h7.400 l-3.700 5z" fill="#f2f2f2"/></svg>
<div class="t dt" style="right:1359.0px;top:445.9px;font-size:12px;color:#ececec;letter-spacing:0px;">Breite:</div>
<div class="a" style="left:564px;top:442px;width:13px;height:17px;background:linear-gradient(#636363,#4e4e4e);border:1px solid #2c2c2c"></div><svg style="left:564px;top:442px" width="13" height="17"><path d="M3.2 6.500 l3.300 -4 l3.300 4z M3.2 10.5 l3.300 4 l3.300 -4z" fill="#f0f0f0"/><path d="M1 8.5 H12" stroke="#333"/></svg>
<div class="a" style="left:579px;top:442px;width:55px;height:18px;background:#a3a3a3;border:1px solid #2c2c2c;border-top-color:#1e1e1e;border-bottom-color:#555;box-shadow:inset 0 1px 0 #8c8c8c;color:#0a0a0a;font-size:12px;line-height:18px;padding-left:2px;white-space:nowrap;overflow:hidden;-webkit-text-stroke:0.250px currentColor">210 mm</div>
<div class="t dt" style="right:1359.0px;top:470.9px;font-size:12px;color:#ececec;letter-spacing:0px;">Höhe:</div>
<div class="a" style="left:564px;top:467px;width:13px;height:17px;background:linear-gradient(#636363,#4e4e4e);border:1px solid #2c2c2c"></div><svg style="left:564px;top:467px" width="13" height="17"><path d="M3.2 6.500 l3.300 -4 l3.300 4z M3.2 10.5 l3.300 4 l3.300 -4z" fill="#f0f0f0"/><path d="M1 8.5 H12" stroke="#333"/></svg>
<div class="a" style="left:579px;top:467px;width:55px;height:18px;background:#a3a3a3;border:1px solid #2c2c2c;border-top-color:#1e1e1e;border-bottom-color:#555;box-shadow:inset 0 1px 0 #8c8c8c;color:#0a0a0a;font-size:12px;line-height:18px;padding-left:2px;white-space:nowrap;overflow:hidden;-webkit-text-stroke:0.250px currentColor">297 mm</div>
<div class="t dt" style="left:689.0px;top:445.9px;font-size:12px;color:#ececec;letter-spacing:0.1px;">Ausrichtung:</div>
<div class="a" style="left:761px;top:441px;width:46px;height:24px;border:1px solid #3c3c3c;background:#444"></div>
<div class="a" style="left:763px;top:443px;width:20px;height:20px;background:#262626"></div>
<svg style="left:765px;top:444px" width="42" height="18"><path d="M1 0.500 H11 L14 3.500 V17.500 H1z" fill="#c6c6c6"/><path d="M11 0.500 V3.500 H14z" fill="#262626" stroke="#c6c6c6" stroke-width="0.600"/><circle cx="7.500" cy="6" r="1.700" fill="#262626"/><path d="M4.500 9 H10.500 V13.500 H9.500 V17.500 H5.500 V13.500 H4.500z" fill="none" stroke="#262626" stroke-width="1.200"/><path d="M7.500 12 V17.500" stroke="#262626"/><path d="M24 2.500 H35.500 L38.500 5.500 V16.500 H24z" fill="#c6c6c6"/><path d="M35.500 2.500 V5.500 H38.500z" fill="#444" stroke="#c6c6c6" stroke-width="0.600"/><circle cx="28" cy="9.500" r="1.600" fill="#444"/><path d="M30.500 6.500 H34.500 V7.500 H37.500 V11.500 H34.500 V12.500 H30.500z" fill="none" stroke="#444" stroke-width="1.100"/><path d="M33 9.500 H37.500" stroke="#444"/></svg>
<svg style="left:482px;top:522px" width="422" height="101" shape-rendering="crispEdges"><path d="M10 0.500 H0.500 V98.5 H419.5 V0.500 H180" fill="none" stroke="#2f2f2f"/><path d="M10 1.500 H1.500 V97.5 M180 1.500 H418.5 M1.500 99.5 H420.5 M420.5 1.500 V99.5" fill="none" stroke="#5c5c5c"/></svg>
<svg style="left:498px;top:519px" width="11" height="7"><path d="M0.500 1 H10 L5.200 6z" fill="#f0f0f0"/></svg>
<div class="t dt" style="left:517.0px;top:515.9px;font-size:12px;color:#ececec;letter-spacing:0.2px;">Anschnitt und Infobereich</div>
<div class="t dt" style="left:498.7px;top:537.9px;width:200px;text-align:center;font-size:12px;color:#ececec;letter-spacing:0px;">Oben</div>
<div class="t dt" style="left:575.7px;top:537.9px;width:200px;text-align:center;font-size:12px;color:#ececec;letter-spacing:0px;">Unten</div>
<div class="t dt" style="left:652.7px;top:537.9px;width:200px;text-align:center;font-size:12px;color:#ececec;letter-spacing:0px;">Innen</div>
<div class="t dt" style="left:724.5px;top:537.9px;width:200px;text-align:center;font-size:12px;color:#ececec;letter-spacing:0px;">Außen</div>
<div class="t dt" style="right:1362.0px;top:562.9px;font-size:12px;color:#ececec;letter-spacing:0px;">Anschnitt:</div>
<div class="t dt" style="right:1362.0px;top:587.9px;font-size:12px;color:#ececec;letter-spacing:0px;">Infobereich:</div>
<div class="a" style="left:564px;top:559px;width:70px;height:18px;background:#a3a3a3;border:1px solid #2c2c2c;border-top-color:#1e1e1e;border-bottom-color:#555;box-shadow:inset 0 1px 0 #8c8c8c;color:#0a0a0a;font-size:12px;line-height:18px;padding-left:2px;white-space:nowrap;overflow:hidden;-webkit-text-stroke:0.250px currentColor">2 mm</div>
<div class="a" style="left:564px;top:584px;width:70px;height:18px;background:#a3a3a3;border:1px solid #2c2c2c;border-top-color:#1e1e1e;border-bottom-color:#555;box-shadow:inset 0 1px 0 #8c8c8c;color:#0a0a0a;font-size:12px;line-height:18px;padding-left:2px;white-space:nowrap;overflow:hidden;-webkit-text-stroke:0.250px currentColor">0 mm</div>
<div class="a" style="left:641px;top:559px;width:70px;height:18px;background:#a3a3a3;border:1px solid #2c2c2c;border-top-color:#1e1e1e;border-bottom-color:#555;box-shadow:inset 0 1px 0 #8c8c8c;color:#0a0a0a;font-size:12px;line-height:18px;padding-left:2px;white-space:nowrap;overflow:hidden;-webkit-text-stroke:0.250px currentColor">2 mm</div>
<div class="a" style="left:641px;top:584px;width:70px;height:18px;background:#a3a3a3;border:1px solid #2c2c2c;border-top-color:#1e1e1e;border-bottom-color:#555;box-shadow:inset 0 1px 0 #8c8c8c;color:#0a0a0a;font-size:12px;line-height:18px;padding-left:2px;white-space:nowrap;overflow:hidden;-webkit-text-stroke:0.250px currentColor">0 mm</div>
<div class="a" style="left:718px;top:559px;width:70px;height:18px;background:#a3a3a3;border:1px solid #2c2c2c;border-top-color:#1e1e1e;border-bottom-color:#555;box-shadow:inset 0 1px 0 #8c8c8c;color:#0a0a0a;font-size:12px;line-height:18px;padding-left:2px;white-space:nowrap;overflow:hidden;-webkit-text-stroke:0.250px currentColor">2 mm</div>
<div class="a" style="left:718px;top:584px;width:70px;height:18px;background:#a3a3a3;border:1px solid #2c2c2c;border-top-color:#1e1e1e;border-bottom-color:#555;box-shadow:inset 0 1px 0 #8c8c8c;color:#0a0a0a;font-size:12px;line-height:18px;padding-left:2px;white-space:nowrap;overflow:hidden;-webkit-text-stroke:0.250px currentColor">0 mm</div>
<div class="a" style="left:795px;top:559px;width:70px;height:18px;background:#a3a3a3;border:1px solid #2c2c2c;border-top-color:#1e1e1e;border-bottom-color:#555;box-shadow:inset 0 1px 0 #8c8c8c;color:#0a0a0a;font-size:12px;line-height:18px;padding-left:2px;white-space:nowrap;overflow:hidden;-webkit-text-stroke:0.250px currentColor">2 mm</div>
<div class="a" style="left:795px;top:584px;width:70px;height:18px;background:#a3a3a3;border:1px solid #2c2c2c;border-top-color:#1e1e1e;border-bottom-color:#555;box-shadow:inset 0 1px 0 #8c8c8c;color:#0a0a0a;font-size:12px;line-height:18px;padding-left:2px;white-space:nowrap;overflow:hidden;-webkit-text-stroke:0.250px currentColor">0 mm</div>
<div class="a" style="left:872px;top:559px;width:18px;height:18px;background:#2c2c2c;border:1px solid #3a3a3a"></div><svg style="left:872px;top:559px" width="18" height="18"><g fill="none" stroke="#eeeeee" stroke-width="1.600"><path d="M6.0 7.500 V5.800 A3 3 0 0 1 12.0 5.800 V7.500"/><path d="M6.0 10.500 V12.200 A3 3 0 0 0 12.0 12.200 V10.500"/><path d="M9.0 5.500 V12.500" stroke-width="1.500"/></g></svg>
<svg style="left:872px;top:584px" width="18" height="18"><g fill="none" stroke="#eeeeee" stroke-width="1.600"><path d="M6.0 7.500 V5.800 A3 3 0 0 1 12.0 5.800 V7.500"/><path d="M6.0 10.500 V12.200 A3 3 0 0 0 12.0 12.200 V10.500"/><path d="M1.5 9 H4.5 M2.0 6 L4.0 7.500 M2.0 12 L4.0 10.500 M13.5 9 H16.5 M16.0 6 L14.0 7.500 M16.0 12 L14.0 10.500" stroke-width="1"/></g></svg>
<div class="a" style="left:482px;top:638px;width:11px;height:11px;background:#5c5c5c;border:1px solid #2e2e2e;box-shadow:inset 0 1px 1px rgba(0,0,0,0.25)"></div><svg style="left:482px;top:635px" width="16" height="16"><path d="M2.600 6.800 L5.200 10 L10.600 2" stroke="#f4f4f4" stroke-width="1.500" fill="none"/></svg>
<div class="t dt" style="left:498.0px;top:637.9px;font-size:12px;color:#ececec;letter-spacing:0px;">Vorschau</div>
<div class="a" style="left:714px;top:634px;width:88px;height:18px;background:linear-gradient(#626262,#4c4c4c);border:1px solid #2a2a2a;box-shadow:inset 0 1px 0 #787878;color:#f4f4f4;font-size:12px;text-align:center;line-height:17px;-webkit-text-stroke:0.200px #f4f4f4">Abbrechen</div>
<div class="a" style="left:813px;top:633px;width:90px;height:20px;background:linear-gradient(#626262,#4c4c4c);border:2px solid #1e1e1e;box-shadow:inset 0 1px 0 #787878;color:#f4f4f4;font-size:12px;text-align:center;line-height:17px;-webkit-text-stroke:0.200px #f4f4f4">OK</div>
<div class="a" style="left:970px;top:377px;width:669px;height:234px;border-radius:5px 5px 4px 4px;box-shadow:0 20px 40px 4px rgba(0,0,0,0.48),0 0 0 0.500px rgba(0,0,0,0.25),0 3px 10px rgba(0,0,0,0.3);background:#494949;overflow:hidden"><div class="a" style="left:0;top:0;width:100%;height:22px;background:linear-gradient(#f0f0f0,#e4e4e4 45%,#d2d2d2);border-bottom:1px solid #9e9e9e"></div><div class="t" style="left:0;top:5.2px;width:100%;text-align:center;font-size:13.500px;color:#3a3a3a;letter-spacing:0.1px">Ränder und Spalten</div></div>
<svg style="left:986px;top:424px" width="529" height="76" shape-rendering="crispEdges"><path d="M8 0.500 H0.500 V73.5 H526.5 V0.500 H58" fill="none" stroke="#2f2f2f"/><path d="M8 1.500 H1.500 V72.5 M58 1.500 H525.5 M1.500 74.5 H527.5 M527.5 1.500 V74.5" fill="none" stroke="#5c5c5c"/></svg>
<div class="t dt" style="left:999.0px;top:418.9px;font-size:12px;color:#ececec;letter-spacing:0px;">Ränder</div>
<div class="t dt" style="right:856.0px;top:443.9px;font-size:12px;color:#ececec;letter-spacing:0px;">Oben:</div>
<div class="a" style="left:1069px;top:441px;width:13px;height:17px;background:linear-gradient(#636363,#4e4e4e);border:1px solid #2c2c2c"></div><svg style="left:1069px;top:441px" width="13" height="17"><path d="M3.2 6.500 l3.300 -4 l3.300 4z M3.2 10.5 l3.300 4 l3.300 -4z" fill="#f0f0f0"/><path d="M1 8.5 H12" stroke="#333"/></svg>
<div class="a" style="left:1083px;top:439px;width:74px;height:21px;border:1.500px solid #e8933c;border-radius:1px"></div><div class="a" style="left:1085px;top:441px;width:70px;height:17px;background:#a3a3a3;border:1px solid #2c2c2c;border-top-color:#1e1e1e;border-bottom-color:#555;box-shadow:inset 0 1px 0 #8c8c8c;color:#0a0a0a;font-size:12px;line-height:17px;padding-left:2px;white-space:nowrap;overflow:hidden;-webkit-text-stroke:0.250px currentColor"><span style="background:#b3d3f4;display:inline-block;padding:1px 1px 1px 0;margin:-1px 0">38 mm</span></div>
<div class="t dt" style="right:856.0px;top:468.9px;font-size:12px;color:#ececec;letter-spacing:0px;">Unten:</div>
<div class="a" style="left:1069px;top:466px;width:13px;height:17px;background:linear-gradient(#636363,#4e4e4e);border:1px solid #2c2c2c"></div><svg style="left:1069px;top:466px" width="13" height="17"><path d="M3.2 6.500 l3.300 -4 l3.300 4z M3.2 10.5 l3.300 4 l3.300 -4z" fill="#f0f0f0"/><path d="M1 8.5 H12" stroke="#333"/></svg>
<div class="a" style="left:1084px;top:466px;width:72px;height:17px;background:#a3a3a3;border:1px solid #2c2c2c;border-top-color:#1e1e1e;border-bottom-color:#555;box-shadow:inset 0 1px 0 #8c8c8c;color:#0a0a0a;font-size:12px;line-height:17px;padding-left:2px;white-space:nowrap;overflow:hidden;-webkit-text-stroke:0.250px currentColor">25 mm</div>
<svg style="left:1163px;top:452px" width="18" height="18"><g fill="none" stroke="#eeeeee" stroke-width="1.600"><path d="M6.0 7.500 V5.800 A3 3 0 0 1 12.0 5.800 V7.500"/><path d="M6.0 10.500 V12.200 A3 3 0 0 0 12.0 12.200 V10.500"/><path d="M1.5 9 H4.5 M2.0 6 L4.0 7.500 M2.0 12 L4.0 10.500 M13.5 9 H16.5 M16.0 6 L14.0 7.500 M16.0 12 L14.0 10.500" stroke-width="1"/></g></svg>
<div class="t dt" style="right:524.0px;top:443.9px;font-size:12px;color:#ececec;letter-spacing:0px;">Innen:</div>
<div class="a" style="left:1401px;top:441px;width:13px;height:17px;background:linear-gradient(#636363,#4e4e4e);border:1px solid #2c2c2c"></div><svg style="left:1401px;top:441px" width="13" height="17"><path d="M3.2 6.500 l3.300 -4 l3.300 4z M3.2 10.5 l3.300 4 l3.300 -4z" fill="#f0f0f0"/><path d="M1 8.5 H12" stroke="#333"/></svg>
<div class="a" style="left:1416px;top:441px;width:72px;height:17px;background:#a3a3a3;border:1px solid #2c2c2c;border-top-color:#1e1e1e;border-bottom-color:#555;box-shadow:inset 0 1px 0 #8c8c8c;color:#0a0a0a;font-size:12px;line-height:17px;padding-left:2px;white-space:nowrap;overflow:hidden;-webkit-text-stroke:0.250px currentColor">35 mm</div>
<div class="t dt" style="right:524.0px;top:468.9px;font-size:12px;color:#ececec;letter-spacing:0px;">Außen:</div>
<div class="a" style="left:1401px;top:466px;width:13px;height:17px;background:linear-gradient(#636363,#4e4e4e);border:1px solid #2c2c2c"></div><svg style="left:1401px;top:466px" width="13" height="17"><path d="M3.2 6.500 l3.300 -4 l3.300 4z M3.2 10.5 l3.300 4 l3.300 -4z" fill="#f0f0f0"/><path d="M1 8.5 H12" stroke="#333"/></svg>
<div class="a" style="left:1416px;top:466px;width:72px;height:17px;background:#a3a3a3;border:1px solid #2c2c2c;border-top-color:#1e1e1e;border-bottom-color:#555;box-shadow:inset 0 1px 0 #8c8c8c;color:#0a0a0a;font-size:12px;line-height:17px;padding-left:2px;white-space:nowrap;overflow:hidden;-webkit-text-stroke:0.250px currentColor">35 mm</div>
<svg style="left:986px;top:515px" width="529" height="46" shape-rendering="crispEdges"><path d="M8 0.500 H0.500 V43.5 H526.5 V0.500 H58" fill="none" stroke="#2f2f2f"/><path d="M8 1.500 H1.500 V42.5 M58 1.500 H525.5 M1.500 44.5 H527.5 M527.5 1.500 V44.5" fill="none" stroke="#5c5c5c"/></svg>
<div class="t dt" style="left:999.0px;top:509.9px;font-size:12px;color:#ececec;letter-spacing:0px;">Spalten</div>
<div class="t dt" style="right:856.0px;top:534.9px;font-size:12px;color:#ececec;letter-spacing:0px;">Anzahl:</div>
<div class="a" style="left:1069px;top:532px;width:13px;height:17px;background:linear-gradient(#636363,#4e4e4e);border:1px solid #2c2c2c"></div><svg style="left:1069px;top:532px" width="13" height="17"><path d="M3.2 6.500 l3.300 -4 l3.300 4z M3.2 10.5 l3.300 4 l3.300 -4z" fill="#f0f0f0"/><path d="M1 8.5 H12" stroke="#333"/></svg>
<div class="a" style="left:1084px;top:532px;width:72px;height:17px;background:#a3a3a3;border:1px solid #2c2c2c;border-top-color:#1e1e1e;border-bottom-color:#555;box-shadow:inset 0 1px 0 #8c8c8c;color:#0a0a0a;font-size:12px;line-height:17px;padding-left:2px;white-space:nowrap;overflow:hidden;-webkit-text-stroke:0.250px currentColor">2</div>
<div class="t dt" style="right:524.0px;top:534.9px;font-size:12px;color:#ececec;letter-spacing:0.15px;">Spaltenabstand:</div>
<div class="a" style="left:1401px;top:532px;width:15px;height:17px;background:linear-gradient(#636363,#4e4e4e);border:1px solid #2c2c2c"></div><svg style="left:1401px;top:532px" width="15" height="17"><path d="M4.2 6.500 l3.300 -4 l3.300 4z M4.2 10.5 l3.300 4 l3.300 -4z" fill="#f0f0f0"/><path d="M1 8.5 H14" stroke="#333"/></svg>
<div class="a" style="left:1418px;top:532px;width:72px;height:17px;background:#a3a3a3;border:1px solid #2c2c2c;border-top-color:#1e1e1e;border-bottom-color:#555;box-shadow:inset 0 1px 0 #8c8c8c;color:#0a0a0a;font-size:12px;line-height:17px;padding-left:2px;white-space:nowrap;overflow:hidden;-webkit-text-stroke:0.250px currentColor">10 mm</div>
<div class="a" style="left:986px;top:575px;width:11px;height:11px;background:#5c5c5c;border:1px solid #2e2e2e;box-shadow:inset 0 1px 1px rgba(0,0,0,0.25)"></div>
<div class="t dt" style="left:1002.0px;top:575.9px;font-size:12px;color:#ececec;letter-spacing:0.05px;">Layoutanpassung aktivieren</div>
<div class="a" style="left:1530px;top:415px;width:94px;height:19px;background:linear-gradient(#626262,#4c4c4c);border:2px solid #1e1e1e;box-shadow:inset 0 1px 0 #787878;color:#f4f4f4;font-size:12px;text-align:center;line-height:16px;-webkit-text-stroke:0.200px #f4f4f4">OK</div>
<div class="a" style="left:1530px;top:446px;width:93px;height:17px;background:linear-gradient(#626262,#4c4c4c);border:1px solid #2a2a2a;box-shadow:inset 0 1px 0 #787878;color:#f4f4f4;font-size:12px;text-align:center;line-height:16px;-webkit-text-stroke:0.200px #f4f4f4">Abbrechen</div>
<div class="a" style="left:1531px;top:478px;width:11px;height:11px;background:#5c5c5c;border:1px solid #2e2e2e;box-shadow:inset 0 1px 1px rgba(0,0,0,0.25)"></div><svg style="left:1531px;top:475px" width="16" height="16"><path d="M2.600 6.800 L5.200 10 L10.600 2" stroke="#f4f4f4" stroke-width="1.500" fill="none"/></svg>
<div class="t dt" style="left:1546.0px;top:478.9px;font-size:12px;color:#ececec;letter-spacing:0px;">Vorschau</div>
<!-- bottom bar content -->
<div class="a" style="left:55px;top:968px;width:2px;height:15px;background:#232323"></div>
<svg style="left:0;top:968px" width="1760" height="15">
<rect x="75" y="3.200" width="19" height="9.800" rx="2" fill="#c6c6c6"/>
<circle cx="80.500" cy="8" r="2.600" fill="none" stroke="#333" stroke-width="2" stroke-dasharray="1.300 0.900"/><circle cx="80.500" cy="8" r="0.900" fill="#c6c6c6"/>
<path d="M86 7 H90 M89 5 L91.500 7 L89 9" stroke="#333" stroke-width="1.300" fill="none"/><path d="M91.500 10 H87.500 M88.500 8.500 L86.500 10 L88.500 11.800" stroke="#333" stroke-width="1.100" fill="none"/>
<path d="M108 4.500 H103 V12.500 H112.500 V10" fill="none" stroke="#dcdcdc" stroke-width="1.500"/><path d="M106 10 Q106.500 6 110.500 6 V3.500 L115.500 7 L110.500 10.500 V8.200 Q108 8 106 10z" fill="#dcdcdc"/>
<g fill="#9c9c9c"><rect x="125" y="4" width="1.400" height="8.500"/><path d="M132.500 4 v8.500 l-5.500 -4.250z"/><path d="M145.500 4 v8.500 l-5.500 -4.250z"/></g>
<path d="M238 7.500 h7.200 l-3.600 5.200z" fill="#e8e8e8"/>
<g fill="#7a7a7a"><path d="M256 4 v8.500 l5.500 -4.250z"/><path d="M268.500 4 v8.500 l5.500 -4.250z"/><rect x="274.600" y="4" width="1.400" height="8.500"/></g>
<circle cx="290.500" cy="8.500" r="6.200" fill="#c8c8c8"/><path d="M287.500 4.500 H291.500 L294 7 V12.500 H287.500z" fill="#4a4a4a"/><path d="M289 6 H291 V8 H292.800 V11.300 H289z" fill="#c8c8c8"/><path d="M297 12 h3.400 l-1.700 2.200z" fill="#e0e0e0"/>
<path d="M415 6.500 h6.400 l-3.200 4.600z" fill="#6c6c6c"/>
<circle cx="435.500" cy="8.500" r="5.200" fill="#606060" stroke="#555"/>
<path d="M514 6.500 h6.400 l-3.200 4.200z" fill="#e0e0e0"/>
<path d="M536.500 3.500 v9 l-6 -4.500z" fill="#f0f0f0"/>
<path d="M1702.500 3.500 v9 l6 -4.500z" fill="#f0f0f0"/>
<rect x="1719.500" y="3.500" width="14" height="10" fill="none" stroke="#e8e8e8" stroke-width="1.300"/><path d="M1726.500 3.500 V13.500" stroke="#e8e8e8" stroke-width="1.300"/>
<g fill="#8a8a8a"><rect x="1748" y="4" width="1.500" height="1.500"/><rect x="1745" y="7" width="1.500" height="1.500"/><rect x="1748" y="7" width="1.500" height="1.500"/><rect x="1742" y="10" width="1.500" height="1.500"/><rect x="1745" y="10" width="1.500" height="1.500"/><rect x="1748" y="10" width="1.500" height="1.500"/><rect x="1739" y="13" width="1.500" height="1.500"/><rect x="1742" y="13" width="1.500" height="1.500"/><rect x="1745" y="13" width="1.500" height="1.500"/><rect x="1748" y="13" width="1.500" height="1.500"/></g>
</svg>
<div class="t" style="left:155px;top:973px;font-size:9.400px;color:#ececec">A-Master</div>
<div class="t" style="left:310px;top:973px;font-size:9.100px;color:#777">[Grundprofil] (Arbeitsp...</div>
<div class="t" style="left:444px;top:973px;font-size:9.100px;color:#e8e8e8">Preflight aus</div>
</div></body></html>
